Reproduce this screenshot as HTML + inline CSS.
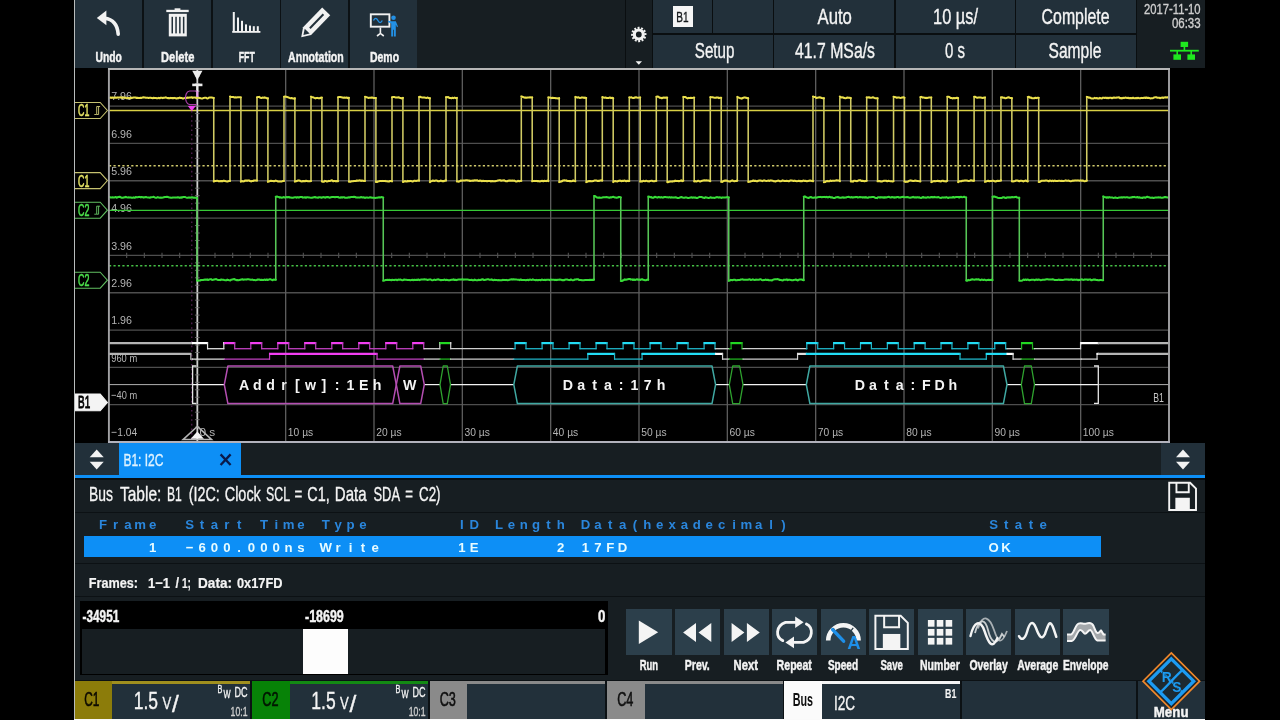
<!DOCTYPE html>
<html lang="en"><head><meta charset="utf-8"><title>Oscilloscope - I2C bus decode</title>
<style>
*{box-sizing:border-box}
html,body{margin:0;padding:0;background:#000}
body{position:relative;width:1280px;height:720px;overflow:hidden;font-family:"Liberation Sans",sans-serif;color:#fff}
.b{position:absolute}
#scope{position:absolute;left:0;top:0;width:1280px;height:720px;will-change:transform}
.t{position:absolute;white-space:pre;transform-origin:0 0;display:block}
svg{position:absolute;display:block}
svg.plot{left:75px;top:67px}
svg.ov{left:0;top:0;pointer-events:none}
.screen{position:absolute;left:75px;top:0;width:1130px;height:720px;background:#171e22}
</style></head><body>
<div id="scope">
<div class="screen"></div>
<div id="toolbar">
<div class="b" style="left:75px;top:0px;width:1130px;height:68px;background:#171e22;"></div>
<div class="b" style="left:73.5px;top:0px;width:1.5px;height:68px;background:#0c1114;"></div>
<div class="b btn" style="left:75px;top:0px;width:67px;height:68px;background:#22303a;"></div>
<div class="b" style="left:142px;top:0px;width:1.5px;height:68px;background:#0c1114;"></div>
<div class="b" style="left:142.5px;top:0px;width:1.5px;height:68px;background:#0c1114;"></div>
<div class="b btn" style="left:144px;top:0px;width:67px;height:68px;background:#22303a;"></div>
<div class="b" style="left:211px;top:0px;width:1.5px;height:68px;background:#0c1114;"></div>
<div class="b" style="left:211px;top:0px;width:1.5px;height:68px;background:#0c1114;"></div>
<div class="b btn" style="left:212.5px;top:0px;width:67px;height:68px;background:#22303a;"></div>
<div class="b" style="left:279.5px;top:0px;width:1.5px;height:68px;background:#0c1114;"></div>
<div class="b" style="left:279.5px;top:0px;width:1.5px;height:68px;background:#0c1114;"></div>
<div class="b btn" style="left:281px;top:0px;width:67px;height:68px;background:#22303a;"></div>
<div class="b" style="left:348px;top:0px;width:1.5px;height:68px;background:#0c1114;"></div>
<div class="b" style="left:348.5px;top:0px;width:1.5px;height:68px;background:#0c1114;"></div>
<div class="b btn" style="left:350px;top:0px;width:67px;height:68px;background:#22303a;"></div>
<div class="b" style="left:624.8px;top:0px;width:1.2px;height:68px;background:#0a0e10;"></div>
<div class="b" style="left:651.8px;top:0px;width:1.2px;height:68px;background:#0a0e10;"></div>
<div class="b" style="left:653px;top:0px;width:484px;height:68px;background:#0a0e10;"></div>
<div class="b cell" style="left:653px;top:0px;width:59px;height:33px;background:#22303a;"></div>
<div class="b cell" style="left:713.4px;top:0px;width:59.2px;height:33px;background:#22303a;"></div>
<div class="b cell" style="left:653px;top:35px;width:119.6px;height:33px;background:#22303a;"></div>
<div class="b cell" style="left:774.3px;top:0px;width:119.5px;height:33px;background:#22303a;"></div>
<div class="b cell" style="left:774.3px;top:35px;width:119.5px;height:33px;background:#22303a;"></div>
<div class="b cell" style="left:895.5px;top:0px;width:119.1px;height:33px;background:#22303a;"></div>
<div class="b cell" style="left:895.5px;top:35px;width:119.1px;height:33px;background:#22303a;"></div>
<div class="b cell" style="left:1016.3px;top:0px;width:119.5px;height:33px;background:#22303a;"></div>
<div class="b cell" style="left:1016.3px;top:35px;width:119.5px;height:33px;background:#22303a;"></div>
<div class="b" style="left:672.5px;top:6.3px;width:20.6px;height:21px;background:#f6f6f6;"></div>
<svg class="ov" width="1280" height="720" viewBox="0 0 1280 720" font-family="Liberation Sans, sans-serif"><text x="95.60" y="62" font-size="15.12" fill="#f4f4f4" stroke="#f4f4f4" stroke-width="0.45" textLength="26.30" lengthAdjust="spacingAndGlyphs" xml:space="preserve" font-weight="700">Undo</text><text x="161.00" y="62" font-size="15.12" fill="#f4f4f4" stroke="#f4f4f4" stroke-width="0.45" textLength="33.39" lengthAdjust="spacingAndGlyphs" xml:space="preserve" font-weight="700">Delete</text><text x="238.75" y="62" font-size="15.12" fill="#f4f4f4" stroke="#f4f4f4" stroke-width="0.45" textLength="16.00" lengthAdjust="spacingAndGlyphs" xml:space="preserve" font-weight="700">FFT</text><text x="288.10" y="62" font-size="15.12" fill="#f4f4f4" stroke="#f4f4f4" stroke-width="0.45" textLength="55.64" lengthAdjust="spacingAndGlyphs" xml:space="preserve" font-weight="700">Annotation</text><text x="370.00" y="62" font-size="15.12" fill="#f4f4f4" stroke="#f4f4f4" stroke-width="0.45" textLength="29.01" lengthAdjust="spacingAndGlyphs" xml:space="preserve" font-weight="700">Demo</text><text x="676.30" y="22" font-size="14.53" fill="#14181b" stroke="#14181b" stroke-width="0.35" textLength="12.31" lengthAdjust="spacingAndGlyphs" xml:space="preserve">B1</text><text x="694.80" y="58" font-size="21.80" fill="#f4f4f4" stroke="#f4f4f4" stroke-width="0.35" textLength="39.61" lengthAdjust="spacingAndGlyphs" xml:space="preserve">Setup</text><text x="817.50" y="24" font-size="21.22" fill="#f4f4f4" stroke="#f4f4f4" stroke-width="0.35" textLength="34.39" lengthAdjust="spacingAndGlyphs" xml:space="preserve">Auto</text><text x="795.00" y="58" font-size="21.80" fill="#f4f4f4" stroke="#f4f4f4" stroke-width="0.35" textLength="80.01" lengthAdjust="spacingAndGlyphs" xml:space="preserve">41.7 MSa/s</text><text x="933.10" y="24" font-size="21.22" fill="#f4f4f4" stroke="#f4f4f4" stroke-width="0.35" textLength="44.95" lengthAdjust="spacingAndGlyphs" xml:space="preserve">10 µs/</text><text x="945.00" y="58" font-size="21.80" fill="#f4f4f4" stroke="#f4f4f4" stroke-width="0.35" textLength="19.99" lengthAdjust="spacingAndGlyphs" xml:space="preserve">0 s</text><text x="1041.60" y="24" font-size="21.22" fill="#f4f4f4" stroke="#f4f4f4" stroke-width="0.35" textLength="67.90" lengthAdjust="spacingAndGlyphs" xml:space="preserve">Complete</text><text x="1048.50" y="58" font-size="21.80" fill="#f4f4f4" stroke="#f4f4f4" stroke-width="0.35" textLength="52.81" lengthAdjust="spacingAndGlyphs" xml:space="preserve">Sample</text><text x="1144.00" y="14" font-size="14.83" fill="#cfcfcf" stroke="#cfcfcf" stroke-width="0.35" textLength="56.61" lengthAdjust="spacingAndGlyphs" xml:space="preserve">2017-11-10</text><text x="1171.90" y="28" font-size="14.24" fill="#cfcfcf" stroke="#cfcfcf" stroke-width="0.35" textLength="28.70" lengthAdjust="spacingAndGlyphs" xml:space="preserve">06:33</text></svg>
</div>
<svg class="plot" width="1130" height="376" viewBox="75 67 1130 376" font-family="Liberation Sans, sans-serif">
<rect x="75" y="68" width="1130" height="375" fill="#000"/>
<g stroke="#4e4e4e" stroke-width="1.3" fill="none"><line x1="109.0" x2="1169.0" y1="106.08" y2="106.08"/><line x1="109.0" x2="1169.0" y1="143.41" y2="143.41"/><line x1="109.0" x2="1169.0" y1="180.74" y2="180.74"/><line x1="109.0" x2="1169.0" y1="218.07" y2="218.07"/><line x1="109.0" x2="1169.0" y1="255.40" y2="255.40"/><line x1="109.0" x2="1169.0" y1="292.73" y2="292.73"/><line x1="109.0" x2="1169.0" y1="330.06" y2="330.06"/><line x1="109.0" x2="1169.0" y1="367.39" y2="367.39"/><line x1="109.0" x2="1169.0" y1="404.72" y2="404.72"/></g><g stroke="#5e5e5e" stroke-width="1.3" fill="none"><line y1="68.75" y2="442.05" x1="285.67" x2="285.67"/><line y1="68.75" y2="442.05" x1="374.00" x2="374.00"/><line y1="68.75" y2="442.05" x1="462.33" x2="462.33"/><line y1="68.75" y2="442.05" x1="550.67" x2="550.67"/><line y1="68.75" y2="442.05" x1="639.00" x2="639.00"/><line y1="68.75" y2="442.05" x1="727.33" x2="727.33"/><line y1="68.75" y2="442.05" x1="815.67" x2="815.67"/><line y1="68.75" y2="442.05" x1="904.00" x2="904.00"/><line y1="68.75" y2="442.05" x1="992.33" x2="992.33"/><line y1="68.75" y2="442.05" x1="1080.67" x2="1080.67"/></g><path d="M126.67,252.80v5.2M144.33,252.80v5.2M162.00,252.80v5.2M179.67,252.80v5.2M215.00,252.80v5.2M232.67,252.80v5.2M250.33,252.80v5.2M268.00,252.80v5.2M303.33,252.80v5.2M321.00,252.80v5.2M338.67,252.80v5.2M356.33,252.80v5.2M391.67,252.80v5.2M409.33,252.80v5.2M427.00,252.80v5.2M444.67,252.80v5.2M480.00,252.80v5.2M497.67,252.80v5.2M515.33,252.80v5.2M533.00,252.80v5.2M568.33,252.80v5.2M586.00,252.80v5.2M603.67,252.80v5.2M621.33,252.80v5.2M656.67,252.80v5.2M674.33,252.80v5.2M692.00,252.80v5.2M709.67,252.80v5.2M745.00,252.80v5.2M762.67,252.80v5.2M780.33,252.80v5.2M798.00,252.80v5.2M833.33,252.80v5.2M851.00,252.80v5.2M868.67,252.80v5.2M886.33,252.80v5.2M921.67,252.80v5.2M939.33,252.80v5.2M957.00,252.80v5.2M974.67,252.80v5.2M1010.00,252.80v5.2M1027.67,252.80v5.2M1045.33,252.80v5.2M1063.00,252.80v5.2M1098.33,252.80v5.2M1116.00,252.80v5.2M1133.67,252.80v5.2M1151.33,252.80v5.2" stroke="#525252" stroke-width="1.1" fill="none"/>
<g><text x="111.20" y="100.28" font-size="11.80" fill="#b4b4b4" textLength="20.79" lengthAdjust="spacingAndGlyphs">7.96</text><text x="111.20" y="137.61" font-size="11.80" fill="#b4b4b4" textLength="20.79" lengthAdjust="spacingAndGlyphs">6.96</text><text x="111.20" y="174.94" font-size="11.80" fill="#b4b4b4" textLength="20.79" lengthAdjust="spacingAndGlyphs">5.96</text><text x="111.20" y="212.27" font-size="11.80" fill="#b4b4b4" textLength="20.79" lengthAdjust="spacingAndGlyphs">4.96</text><text x="111.20" y="249.60" font-size="11.80" fill="#b4b4b4" textLength="20.79" lengthAdjust="spacingAndGlyphs">3.96</text><text x="111.20" y="286.93" font-size="11.80" fill="#b4b4b4" textLength="20.79" lengthAdjust="spacingAndGlyphs">2.96</text><text x="111.20" y="324.26" font-size="11.80" fill="#b4b4b4" textLength="20.79" lengthAdjust="spacingAndGlyphs">1.96</text><text x="111.20" y="361.59" font-size="11.80" fill="#b4b4b4" textLength="25.99" lengthAdjust="spacingAndGlyphs">960 m</text><text x="111.20" y="398.92" font-size="11.80" fill="#b4b4b4" textLength="26.00" lengthAdjust="spacingAndGlyphs">−40 m</text><text x="111.20" y="436.25" font-size="11.80" fill="#b4b4b4" textLength="26.00" lengthAdjust="spacingAndGlyphs">−1.04</text><text x="199.40" y="436.20" font-size="11.80" fill="#b4b4b4" textLength="15.79" lengthAdjust="spacingAndGlyphs">0 s</text><text x="287.87" y="436.20" font-size="11.80" fill="#b4b4b4" textLength="25.39" lengthAdjust="spacingAndGlyphs">10 µs</text><text x="376.20" y="436.20" font-size="11.80" fill="#b4b4b4" textLength="25.39" lengthAdjust="spacingAndGlyphs">20 µs</text><text x="464.53" y="436.20" font-size="11.80" fill="#b4b4b4" textLength="25.39" lengthAdjust="spacingAndGlyphs">30 µs</text><text x="552.87" y="436.20" font-size="11.80" fill="#b4b4b4" textLength="25.39" lengthAdjust="spacingAndGlyphs">40 µs</text><text x="641.20" y="436.20" font-size="11.80" fill="#b4b4b4" textLength="25.39" lengthAdjust="spacingAndGlyphs">50 µs</text><text x="729.53" y="436.20" font-size="11.80" fill="#b4b4b4" textLength="25.39" lengthAdjust="spacingAndGlyphs">60 µs</text><text x="817.87" y="436.20" font-size="11.80" fill="#b4b4b4" textLength="25.39" lengthAdjust="spacingAndGlyphs">70 µs</text><text x="906.20" y="436.20" font-size="11.80" fill="#b4b4b4" textLength="25.39" lengthAdjust="spacingAndGlyphs">80 µs</text><text x="994.53" y="436.20" font-size="11.80" fill="#b4b4b4" textLength="25.39" lengthAdjust="spacingAndGlyphs">90 µs</text><text x="1082.87" y="436.20" font-size="11.80" fill="#b4b4b4" textLength="31.00" lengthAdjust="spacingAndGlyphs">100 µs</text></g>
<line x1="109.0" x2="1169.0" y1="110.5" y2="110.5" stroke="#d9d045" stroke-width="1.3"/>
<line x1="109.0" x2="1169.0" y1="165.7" y2="165.7" stroke="#cfc96c" stroke-width="1.45" stroke-dasharray="2.2 2.25"/>
<line x1="109.0" x2="1169.0" y1="210.4" y2="210.4" stroke="#36c836" stroke-width="1.3"/>
<line x1="109.0" x2="1169.0" y1="265.8" y2="265.8" stroke="#46c046" stroke-width="1.45" stroke-dasharray="2.2 2.25"/>
<line x1="191.8" x2="191.8" y1="111" y2="441.05" stroke="#632763" stroke-width="1.1" stroke-dasharray="1.6 3"/><line x1="197.33" x2="197.33" y1="68.75" y2="442.05" stroke="#cfcfcf" stroke-width="1.8"/><path d="M194.93,76.22h4.8M194.93,83.68h4.8M194.93,91.15h4.8M194.93,98.61h4.8M194.93,106.08h4.8M194.93,113.55h4.8M194.93,121.01h4.8M194.93,128.48h4.8M194.93,135.94h4.8M194.93,143.41h4.8M194.93,150.88h4.8M194.93,158.34h4.8M194.93,165.81h4.8M194.93,173.27h4.8M194.93,180.74h4.8M194.93,188.21h4.8M194.93,195.67h4.8M194.93,203.14h4.8M194.93,210.60h4.8M194.93,218.07h4.8M194.93,225.54h4.8M194.93,233.00h4.8M194.93,240.47h4.8M194.93,247.93h4.8M194.93,255.40h4.8M194.93,262.87h4.8M194.93,270.33h4.8M194.93,277.80h4.8M194.93,285.26h4.8M194.93,292.73h4.8M194.93,300.20h4.8M194.93,307.66h4.8M194.93,315.13h4.8M194.93,322.59h4.8M194.93,330.06h4.8M194.93,337.53h4.8M194.93,344.99h4.8M194.93,352.46h4.8M194.93,359.92h4.8M194.93,367.39h4.8M194.93,374.86h4.8M194.93,382.32h4.8M194.93,389.79h4.8M194.93,397.25h4.8M194.93,404.72h4.8M194.93,412.19h4.8M194.93,419.65h4.8M194.93,427.12h4.8M194.93,434.58h4.8" stroke="#707070" stroke-width="0.9" fill="none"/>
<path d="M213.75,97.3V181.5M230.00,97.3V181.5M240.90,97.3V181.5M257.00,97.3V181.5M267.90,97.3V181.5M284.00,97.3V181.5M294.90,97.3V181.5M311.00,97.3V181.5M321.90,97.3V181.5M338.00,97.3V181.5M348.90,97.3V181.5M365.00,97.3V181.5M375.90,97.3V181.5M392.00,97.3V181.5M402.90,97.3V181.5M419.00,97.3V181.5M429.90,97.3V181.5M446.00,97.3V181.5M456.90,97.3V181.5M521.30,97.3V181.5M532.20,97.3V181.5M548.30,97.3V181.5M559.20,97.3V181.5M575.30,97.3V181.5M586.20,97.3V181.5M602.30,97.3V181.5M613.20,97.3V181.5M629.30,97.3V181.5M640.20,97.3V181.5M656.30,97.3V181.5M667.20,97.3V181.5M683.30,97.3V181.5M694.20,97.3V181.5M710.30,97.3V181.5M721.20,97.3V181.5M737.30,97.3V181.5M748.20,97.3V181.5M813.00,97.3V181.5M823.90,97.3V181.5M839.85,97.3V181.5M850.75,97.3V181.5M866.70,97.3V181.5M877.60,97.3V181.5M893.55,97.3V181.5M904.45,97.3V181.5M920.40,97.3V181.5M931.30,97.3V181.5M947.25,97.3V181.5M958.15,97.3V181.5M974.10,97.3V181.5M985.00,97.3V181.5M1000.95,97.3V181.5M1011.85,97.3V181.5M1027.80,97.3V181.5M1038.70,97.3V181.5M1086.75,97.3V181.5" fill="none" stroke="#d2cc64" stroke-width="1.55"/><path d="M109.6,97.7 L110.6,97.5 L111.6,97.9 L112.6,97.5 L113.6,97.7 L114.6,97.7 L115.6,97.4 L116.6,97.7 L117.6,97.4 L118.6,97.6 L119.6,97.4 L120.6,97.3 L121.6,97.5 L122.6,98.0 L123.6,97.6 L124.6,97.5 L125.6,97.8 L126.6,98.3 L127.6,98.1 L128.6,97.9 L129.6,98.4 L130.6,97.7 L131.6,98.1 L132.6,97.8 L133.6,97.5 L134.6,97.4 L135.6,97.5 L136.6,98.0 L137.6,97.7 L138.6,97.9 L139.6,98.0 L140.6,97.8 L141.6,97.9 L142.6,97.5 L143.6,97.3 L144.7,97.4 L145.7,97.8 L146.7,97.8 L147.7,97.7 L148.7,97.9 L149.7,97.8 L150.7,97.7 L151.7,98.1 L152.7,98.2 L153.7,97.8 L154.7,97.9 L155.7,97.9 L156.7,98.3 L157.7,98.3 L158.7,97.9 L159.7,98.3 L160.7,97.7 L161.7,97.8 L162.7,98.1 L163.7,97.7 L164.7,97.8 L165.7,97.4 L166.7,97.8 L167.7,98.1 L168.7,98.1 L169.7,98.3 L170.7,97.9 L171.7,98.1 L172.7,98.1 L173.7,98.1 L174.7,97.9 L175.7,98.2 L176.7,98.5 L177.7,98.1 L178.7,98.2 L179.7,97.6 L180.7,98.0 L181.7,98.1 L182.7,98.4 L183.7,98.4 L184.7,97.9 L185.7,97.8 L186.7,98.0 L187.7,97.5 L188.7,97.7 L189.7,97.5 L190.7,97.4 L191.7,97.2 L192.7,97.9 L193.7,97.5 L194.7,97.5 L195.7,97.6 L196.7,98.1 L197.7,97.6 L198.7,97.7 L199.7,97.9 L200.7,98.2 L201.7,98.4 L202.7,98.4 L203.7,97.9 L204.7,97.8 L205.7,97.7 L206.7,98.2 L207.7,98.5 L208.7,97.8 L209.7,97.6 L210.7,97.5 L211.7,97.5 L212.7,97.7 L213.8,97.9M213.8,181.5 L214.8,180.9 L215.8,181.0 L216.8,180.8 L217.8,180.8 L218.8,181.3 L219.8,181.3 L220.9,181.1 L221.9,181.1 L222.9,181.1 L223.9,180.6 L224.9,181.1 L225.9,181.3 L227.0,181.4 L228.0,181.4 L229.0,181.0 L230.0,180.9M230.0,96.5 L231.1,97.1 L232.2,97.0 L233.3,97.1 L234.4,97.4 L235.4,97.3 L236.5,97.5 L237.6,97.3 L238.7,97.2 L239.8,97.2 L240.9,97.2M240.9,181.6 L241.9,181.0 L242.9,181.4 L243.9,181.3 L244.9,180.6 L245.9,180.6 L246.9,180.6 L247.9,180.6 L248.9,180.4 L250.0,181.0 L251.0,181.4 L252.0,181.1 L253.0,181.0 L254.0,180.5 L255.0,180.4 L256.0,180.5 L257.0,180.5M257.0,97.2 L258.1,97.0 L259.2,96.9 L260.3,97.8 L261.4,98.0 L262.4,97.6 L263.5,97.8 L264.6,97.4 L265.7,97.7 L266.8,98.3 L267.9,98.4M267.9,181.9 L268.9,181.4 L269.9,181.1 L270.9,180.7 L271.9,181.0 L272.9,181.0 L273.9,181.2 L274.9,180.9 L275.9,180.6 L277.0,181.1 L278.0,181.4 L279.0,181.5 L280.0,181.4 L281.0,181.4 L282.0,181.4 L283.0,180.9 L284.0,180.9M284.0,96.8 L285.1,96.6 L286.2,96.7 L287.3,97.1 L288.4,97.4 L289.4,97.9 L290.5,98.3 L291.6,98.0 L292.7,98.4 L293.8,98.6 L294.9,98.6M294.9,181.6 L295.9,181.2 L296.9,180.9 L297.9,180.6 L298.9,180.4 L299.9,180.8 L300.9,181.2 L301.9,181.4 L302.9,181.1 L304.0,181.1 L305.0,181.3 L306.0,180.7 L307.0,181.0 L308.0,181.3 L309.0,181.3 L310.0,181.3 L311.0,181.1M311.0,96.6 L312.1,97.3 L313.2,97.3 L314.3,97.9 L315.4,98.4 L316.4,98.0 L317.5,97.9 L318.6,98.3 L319.7,98.3 L320.8,97.8 L321.9,97.5M321.9,181.4 L322.9,181.7 L323.9,181.7 L324.9,180.9 L325.9,181.1 L326.9,181.5 L327.9,181.3 L328.9,180.9 L329.9,181.0 L331.0,180.6 L332.0,180.3 L333.0,181.1 L334.0,181.1 L335.0,181.0 L336.0,181.4 L337.0,181.0 L338.0,181.3M338.0,97.2 L339.1,97.0 L340.2,97.1 L341.3,97.3 L342.4,97.5 L343.4,97.8 L344.5,97.6 L345.6,97.7 L346.7,97.5 L347.8,98.1 L348.9,97.8M348.9,181.7 L349.9,181.6 L350.9,181.7 L351.9,181.2 L352.9,181.3 L353.9,181.1 L354.9,181.0 L355.9,181.0 L356.9,180.5 L358.0,180.7 L359.0,180.5 L360.0,180.3 L361.0,180.9 L362.0,180.6 L363.0,180.7 L364.0,181.0 L365.0,181.0M365.0,96.7 L366.1,97.1 L367.2,97.4 L368.3,97.9 L369.4,97.7 L370.4,97.8 L371.5,97.6 L372.6,97.6 L373.7,98.0 L374.8,98.0 L375.9,98.0M375.9,181.9 L376.9,182.0 L377.9,181.5 L378.9,181.3 L379.9,181.0 L380.9,181.0 L381.9,181.1 L382.9,180.9 L383.9,181.0 L385.0,180.9 L386.0,181.3 L387.0,181.3 L388.0,181.4 L389.0,181.5 L390.0,181.0 L391.0,181.0 L392.0,181.4M392.0,97.2 L393.1,97.0 L394.2,97.0 L395.3,97.4 L396.4,97.4 L397.4,97.4 L398.5,97.3 L399.6,97.8 L400.7,98.1 L401.8,98.4 L402.9,97.8M402.9,181.9 L403.9,181.7 L404.9,181.1 L405.9,181.4 L406.9,181.5 L407.9,180.9 L408.9,181.3 L409.9,181.0 L410.9,180.9 L412.0,181.4 L413.0,181.4 L414.0,180.8 L415.0,180.8 L416.0,180.9 L417.0,180.7 L418.0,180.5 L419.0,180.6M419.0,97.1 L420.1,96.8 L421.2,97.3 L422.3,97.5 L423.4,97.4 L424.4,97.5 L425.5,97.8 L426.6,97.9 L427.7,97.5 L428.8,98.2 L429.9,98.3M429.9,182.1 L430.9,181.3 L431.9,181.0 L432.9,180.5 L433.9,180.9 L434.9,180.7 L435.9,180.5 L436.9,180.6 L437.9,181.2 L439.0,181.3 L440.0,180.9 L441.0,180.6 L442.0,181.1 L443.0,181.1 L444.0,181.2 L445.0,180.6 L446.0,180.4M446.0,97.1 L447.1,97.2 L448.2,97.0 L449.3,97.9 L450.4,98.1 L451.4,98.3 L452.5,97.7 L453.6,98.1 L454.7,97.6 L455.8,98.1 L456.9,97.9M456.9,181.5 L457.9,181.5 L458.9,181.7 L459.9,181.1 L460.9,180.5 L461.9,180.8 L462.9,180.6 L463.9,180.4 L464.9,180.4 L466.0,180.2 L467.0,180.3 L468.0,180.5 L469.0,180.5 L470.0,181.0 L471.0,180.7 L472.0,180.8 L473.0,180.6 L474.0,180.6 L475.0,180.3 L476.0,180.4 L477.0,180.2 L478.0,180.8 L479.0,180.9 L480.0,180.6 L481.0,180.7 L482.1,181.2 L483.1,180.7 L484.1,181.1 L485.1,180.9 L486.1,180.9 L487.1,181.2 L488.1,180.9 L489.1,180.9 L490.1,181.1 L491.1,181.4 L492.1,181.0 L493.1,181.3 L494.1,181.3 L495.1,181.2 L496.1,180.9 L497.1,180.8 L498.2,180.4 L499.2,180.3 L500.2,180.2 L501.2,180.8 L502.2,180.6 L503.2,180.5 L504.2,180.3 L505.2,181.0 L506.2,181.3 L507.2,181.2 L508.2,180.8 L509.2,180.6 L510.2,180.6 L511.2,180.7 L512.2,180.5 L513.2,180.7 L514.3,180.6 L515.3,181.2 L516.3,181.5 L517.3,181.2 L518.3,180.8 L519.3,181.3 L520.3,180.9 L521.3,180.8M521.3,96.4 L522.4,96.8 L523.5,97.2 L524.6,97.6 L525.7,97.6 L526.8,97.8 L527.8,97.4 L528.9,97.4 L530.0,97.3 L531.1,97.5 L532.2,97.3M532.2,181.3 L533.2,181.1 L534.2,180.9 L535.2,181.0 L536.2,180.9 L537.2,181.1 L538.2,181.1 L539.2,181.2 L540.2,181.4 L541.3,181.0 L542.3,180.8 L543.3,181.3 L544.3,180.8 L545.3,181.0 L546.3,181.1 L547.3,180.6 L548.3,181.1M548.3,97.3 L549.4,97.4 L550.5,97.7 L551.6,98.1 L552.7,97.8 L553.8,97.9 L554.8,97.9 L555.9,98.2 L557.0,98.3 L558.1,98.4 L559.2,98.2M559.2,182.1 L560.2,181.8 L561.2,181.6 L562.2,181.0 L563.2,180.4 L564.2,180.3 L565.2,180.5 L566.2,180.4 L567.2,181.0 L568.3,181.0 L569.3,181.1 L570.3,181.1 L571.3,181.2 L572.3,181.0 L573.3,180.5 L574.3,181.0 L575.3,181.2M575.3,96.9 L576.4,97.2 L577.5,97.6 L578.6,97.3 L579.7,98.0 L580.8,97.7 L581.8,97.4 L582.9,97.5 L584.0,97.9 L585.1,97.6 L586.2,98.0M586.2,182.1 L587.2,181.7 L588.2,181.3 L589.2,181.1 L590.2,181.1 L591.2,181.2 L592.2,181.2 L593.2,181.1 L594.2,180.6 L595.3,180.4 L596.3,180.5 L597.3,180.9 L598.3,180.7 L599.3,180.9 L600.3,180.4 L601.3,180.3 L602.3,180.4M602.3,97.1 L603.4,97.4 L604.5,97.7 L605.6,97.6 L606.7,97.9 L607.8,97.9 L608.8,97.9 L609.9,97.5 L611.0,98.1 L612.1,97.7 L613.2,98.3M613.2,182.1 L614.2,181.2 L615.2,181.1 L616.2,181.3 L617.2,181.4 L618.2,181.1 L619.2,180.8 L620.2,180.6 L621.2,181.2 L622.3,180.8 L623.3,180.9 L624.3,180.6 L625.3,180.8 L626.3,181.3 L627.3,180.7 L628.3,181.1 L629.3,181.0M629.3,97.3 L630.4,97.5 L631.5,97.3 L632.6,98.0 L633.7,98.0 L634.8,97.5 L635.8,97.3 L636.9,97.6 L638.0,97.7 L639.1,97.6 L640.2,97.4M640.2,181.6 L641.2,181.3 L642.2,181.5 L643.2,180.7 L644.2,181.0 L645.2,181.2 L646.2,180.7 L647.2,181.2 L648.2,181.2 L649.3,181.4 L650.3,180.9 L651.3,180.8 L652.3,180.8 L653.3,181.3 L654.3,181.2 L655.3,180.9 L656.3,180.8M656.3,96.7 L657.4,96.6 L658.5,96.8 L659.6,97.7 L660.7,97.7 L661.8,98.2 L662.8,97.8 L663.9,97.6 L665.0,97.8 L666.1,97.6 L667.2,97.6M667.2,182.1 L668.2,182.1 L669.2,181.8 L670.2,181.5 L671.2,181.5 L672.2,181.6 L673.2,181.2 L674.2,181.3 L675.2,180.6 L676.3,181.0 L677.3,180.9 L678.3,181.1 L679.3,181.1 L680.3,180.8 L681.3,180.4 L682.3,181.1 L683.3,180.6M683.3,96.9 L684.4,97.0 L685.5,97.1 L686.6,97.8 L687.7,98.4 L688.8,97.9 L689.8,98.0 L690.9,97.8 L692.0,97.9 L693.1,97.8 L694.2,97.5M694.2,181.4 L695.2,181.1 L696.2,181.5 L697.2,181.2 L698.2,180.7 L699.2,181.2 L700.2,181.5 L701.2,181.1 L702.2,180.7 L703.3,180.5 L704.3,180.3 L705.3,180.5 L706.3,180.3 L707.3,180.4 L708.3,180.5 L709.3,180.8 L710.3,181.2M710.3,97.1 L711.4,97.2 L712.5,97.3 L713.6,97.6 L714.7,97.8 L715.8,97.7 L716.8,97.4 L717.9,97.5 L719.0,98.1 L720.1,97.7 L721.2,97.8M721.2,181.8 L722.2,181.9 L723.2,181.2 L724.2,180.8 L725.2,180.6 L726.2,180.6 L727.2,180.7 L728.2,181.3 L729.2,181.4 L730.3,181.5 L731.3,180.7 L732.3,180.4 L733.3,180.9 L734.3,181.3 L735.3,181.0 L736.3,181.0 L737.3,180.5M737.3,96.8 L738.4,97.5 L739.5,97.9 L740.6,98.2 L741.7,98.6 L742.8,98.0 L743.8,97.6 L744.9,97.4 L746.0,97.7 L747.1,98.0 L748.2,98.4M748.2,181.9 L749.2,181.7 L750.2,181.7 L751.2,181.2 L752.2,181.0 L753.3,180.5 L754.3,181.0 L755.3,180.7 L756.3,181.2 L757.3,181.2 L758.3,180.8 L759.3,180.5 L760.3,180.5 L761.4,180.8 L762.4,181.1 L763.4,180.6 L764.4,180.4 L765.4,180.7 L766.4,180.9 L767.4,180.8 L768.4,180.6 L769.5,180.9 L770.5,180.4 L771.5,180.5 L772.5,180.7 L773.5,181.2 L774.5,181.2 L775.5,181.4 L776.5,181.1 L777.6,180.7 L778.6,180.6 L779.6,181.2 L780.6,181.2 L781.6,180.9 L782.6,180.4 L783.6,180.7 L784.6,181.0 L785.7,180.9 L786.7,180.7 L787.7,180.9 L788.7,181.3 L789.7,180.8 L790.7,180.4 L791.7,180.5 L792.8,180.7 L793.8,181.0 L794.8,180.6 L795.8,181.1 L796.8,181.2 L797.8,181.0 L798.8,180.7 L799.8,181.2 L800.9,180.9 L801.9,181.2 L802.9,180.8 L803.9,180.6 L804.9,181.0 L805.9,180.8 L806.9,181.3 L807.9,181.1 L809.0,180.7 L810.0,180.5 L811.0,180.7 L812.0,180.9 L813.0,181.3M813.0,96.6 L814.1,96.9 L815.2,97.0 L816.3,97.9 L817.4,97.7 L818.5,97.4 L819.5,97.3 L820.6,97.5 L821.7,98.1 L822.8,98.3 L823.9,98.3M823.9,182.2 L825.0,182.1 L826.0,181.4 L827.1,180.9 L828.2,181.2 L829.2,181.3 L830.3,180.6 L831.3,180.9 L832.4,180.8 L833.5,180.7 L834.5,180.7 L835.6,180.5 L836.7,180.2 L837.7,180.4 L838.8,180.5 L839.9,181.2M839.9,96.5 L840.9,97.4 L842.0,97.3 L843.1,97.4 L844.2,98.1 L845.3,98.3 L846.4,98.0 L847.5,97.5 L848.6,97.7 L849.7,97.7 L850.8,98.2M850.8,181.4 L851.8,181.2 L852.9,181.6 L853.9,180.8 L855.0,180.7 L856.1,181.1 L857.1,181.2 L858.2,180.6 L859.3,180.3 L860.3,180.2 L861.4,181.0 L862.4,180.7 L863.5,181.0 L864.6,181.3 L865.6,180.9 L866.7,180.7M866.7,97.3 L867.8,97.5 L868.9,97.3 L870.0,97.8 L871.1,97.8 L872.2,97.6 L873.2,97.3 L874.3,97.9 L875.4,98.3 L876.5,98.2 L877.6,98.4M877.6,181.3 L878.7,181.1 L879.7,181.1 L880.8,181.4 L881.9,181.5 L882.9,181.1 L884.0,180.7 L885.0,180.8 L886.1,180.8 L887.2,181.3 L888.2,180.8 L889.3,181.1 L890.4,181.2 L891.4,181.3 L892.5,181.4 L893.5,181.2M893.5,96.7 L894.6,96.9 L895.7,97.2 L896.8,97.8 L897.9,97.6 L899.0,97.5 L900.1,97.9 L901.2,97.7 L902.3,97.4 L903.4,97.2 L904.4,97.7M904.4,181.5 L905.5,181.9 L906.6,181.8 L907.6,181.8 L908.7,181.0 L909.8,180.6 L910.8,180.4 L911.9,180.7 L913.0,181.0 L914.0,180.9 L915.1,180.6 L916.1,180.7 L917.2,180.9 L918.3,181.1 L919.3,181.2 L920.4,181.4M920.4,97.1 L921.5,96.9 L922.6,97.6 L923.7,97.5 L924.8,97.9 L925.8,97.8 L926.9,98.1 L928.0,97.7 L929.1,97.6 L930.2,97.5 L931.3,97.4M931.3,182.1 L932.4,181.7 L933.4,181.2 L934.5,181.0 L935.6,181.3 L936.6,181.1 L937.7,180.7 L938.7,181.1 L939.8,181.1 L940.9,181.5 L941.9,180.8 L943.0,180.8 L944.1,181.2 L945.1,181.3 L946.2,181.5 L947.2,180.7M947.2,96.7 L948.3,96.7 L949.4,96.9 L950.5,97.9 L951.6,98.1 L952.7,98.4 L953.8,98.0 L954.9,98.3 L956.0,98.0 L957.1,97.7 L958.1,98.1M958.1,182.1 L959.2,181.3 L960.3,181.3 L961.3,181.2 L962.4,180.7 L963.5,180.7 L964.5,180.5 L965.6,180.4 L966.7,180.5 L967.7,180.8 L968.8,181.0 L969.8,180.7 L970.9,180.3 L972.0,180.5 L973.0,180.9 L974.1,180.6M974.1,96.7 L975.2,96.8 L976.3,97.5 L977.4,97.7 L978.5,97.5 L979.5,97.4 L980.6,97.6 L981.7,97.8 L982.8,98.0 L983.9,97.6 L985.0,97.4M985.0,181.9 L986.1,181.5 L987.1,181.1 L988.2,180.8 L989.3,181.2 L990.3,180.9 L991.4,180.9 L992.4,180.8 L993.5,180.8 L994.6,181.2 L995.6,181.5 L996.7,181.0 L997.8,180.7 L998.8,181.0 L999.9,180.7 L1001.0,180.3M1001.0,97.3 L1002.0,97.2 L1003.1,97.7 L1004.2,97.7 L1005.3,98.3 L1006.4,98.0 L1007.5,97.6 L1008.6,97.3 L1009.7,97.7 L1010.8,97.9 L1011.9,98.3M1011.9,181.3 L1012.9,181.4 L1014.0,181.2 L1015.0,181.0 L1016.1,180.5 L1017.2,180.5 L1018.2,180.8 L1019.3,181.2 L1020.4,180.7 L1021.4,180.8 L1022.5,181.1 L1023.5,181.4 L1024.6,180.9 L1025.7,180.5 L1026.7,181.1 L1027.8,181.5M1027.8,96.9 L1028.9,96.7 L1030.0,97.6 L1031.1,97.6 L1032.2,98.3 L1033.2,98.2 L1034.3,98.3 L1035.4,97.8 L1036.5,98.1 L1037.6,97.7 L1038.7,97.7M1038.7,182.0 L1039.7,182.0 L1040.7,181.2 L1041.7,180.8 L1042.7,180.7 L1043.7,180.8 L1044.7,180.8 L1045.7,180.5 L1046.7,180.5 L1047.7,180.9 L1048.7,181.3 L1049.7,180.6 L1050.7,180.8 L1051.7,181.1 L1052.7,180.6 L1053.7,181.1 L1054.7,180.6 L1055.7,180.9 L1056.7,180.9 L1057.7,181.0 L1058.7,180.8 L1059.7,180.8 L1060.7,180.9 L1061.7,180.8 L1062.7,181.0 L1063.7,180.9 L1064.7,180.8 L1065.7,180.4 L1066.7,180.8 L1067.7,180.8 L1068.7,180.6 L1069.7,181.0 L1070.7,181.2 L1071.7,181.0 L1072.7,180.6 L1073.7,180.8 L1074.7,180.5 L1075.7,180.4 L1076.7,180.6 L1077.7,180.4 L1078.7,180.6 L1079.7,180.8 L1080.7,180.4 L1081.7,180.8 L1082.7,180.5 L1083.7,180.9 L1084.7,181.2 L1085.7,181.0 L1086.8,180.5M1086.8,96.9 L1087.8,97.0 L1088.8,97.8 L1089.8,97.5 L1090.8,98.2 L1091.8,98.5 L1092.8,98.4 L1093.8,98.4 L1094.8,97.8 L1095.8,98.3 L1096.8,98.1 L1097.8,98.4 L1098.8,98.5 L1099.9,97.9 L1100.9,98.2 L1101.9,98.4 L1102.9,97.7 L1103.9,97.7 L1104.9,98.0 L1105.9,97.6 L1106.9,98.2 L1107.9,97.8 L1108.9,98.2 L1109.9,97.7 L1110.9,97.8 L1112.0,98.2 L1113.0,97.8 L1114.0,97.6 L1115.0,97.8 L1116.0,97.7 L1117.0,97.4 L1118.0,97.4 L1119.0,97.3 L1120.0,98.1 L1121.0,98.1 L1122.0,98.4 L1123.0,97.8 L1124.0,98.1 L1125.1,97.6 L1126.1,97.8 L1127.1,98.0 L1128.1,97.8 L1129.1,98.2 L1130.1,98.1 L1131.1,98.1 L1132.1,98.3 L1133.1,97.7 L1134.1,98.3 L1135.1,98.2 L1136.1,97.9 L1137.2,98.2 L1138.2,97.8 L1139.2,98.3 L1140.2,98.2 L1141.2,97.9 L1142.2,98.1 L1143.2,98.0 L1144.2,97.6 L1145.2,98.0 L1146.2,97.5 L1147.2,98.0 L1148.2,97.7 L1149.2,98.0 L1150.3,98.4 L1151.3,98.2 L1152.3,98.2 L1153.3,97.9 L1154.3,97.4 L1155.3,97.2 L1156.3,97.3 L1157.3,97.7 L1158.3,97.8 L1159.3,97.8 L1160.3,98.2 L1161.3,97.7 L1162.4,97.6 L1163.4,97.9 L1164.4,97.4 L1165.4,97.2 L1166.4,97.5 L1167.4,97.3 L1168.4,97.5" fill="none" stroke="#ebe04c" stroke-width="2.05" stroke-linejoin="round" stroke-linecap="round"/>
<path d="M197.00,196.8V280.4M275.75,196.8V280.4M383.25,196.8V280.4M594.00,196.8V280.4M620.75,196.8V280.4M648.25,196.8V280.4M728.75,196.8V280.4M803.75,196.8V280.4M966.25,196.8V280.4M992.50,196.8V280.4M1019.30,196.8V280.4M1103.25,196.8V280.4" fill="none" stroke="#56c656" stroke-width="1.55"/><path d="M109.6,197.1 L110.6,197.4 L111.6,197.5 L112.6,197.2 L113.6,197.4 L114.6,197.4 L115.6,197.0 L116.6,197.7 L117.6,197.3 L118.6,197.0 L119.6,196.8 L120.7,197.3 L121.7,197.7 L122.7,197.8 L123.7,197.5 L124.7,197.2 L125.7,196.9 L126.7,197.3 L127.7,197.4 L128.7,197.3 L129.7,197.5 L130.7,197.4 L131.7,197.8 L132.7,197.8 L133.7,197.3 L134.7,197.8 L135.7,197.1 L136.7,197.3 L137.7,197.3 L138.7,197.1 L139.7,196.9 L140.7,197.4 L141.7,197.0 L142.8,197.2 L143.8,197.7 L144.8,197.2 L145.8,197.0 L146.8,197.3 L147.8,197.4 L148.8,197.5 L149.8,197.7 L150.8,197.3 L151.8,197.2 L152.8,197.1 L153.8,196.8 L154.8,197.5 L155.8,197.7 L156.8,197.7 L157.8,197.1 L158.8,197.6 L159.8,197.7 L160.8,197.5 L161.8,197.7 L162.8,197.5 L163.8,197.2 L164.9,196.9 L165.9,196.9 L166.9,196.8 L167.9,197.0 L168.9,197.4 L169.9,197.6 L170.9,197.8 L171.9,197.8 L172.9,197.4 L173.9,197.4 L174.9,197.4 L175.9,197.6 L176.9,197.5 L177.9,197.2 L178.9,197.5 L179.9,197.9 L180.9,197.3 L181.9,197.7 L182.9,197.1 L183.9,197.0 L184.9,197.0 L185.9,197.4 L187.0,197.8 L188.0,197.8 L189.0,197.4 L190.0,197.8 L191.0,197.4 L192.0,197.2 L193.0,197.7 L194.0,197.6 L195.0,197.7 L196.0,197.7 L197.0,198.0M197.0,280.6 L198.0,280.7 L199.0,280.5 L200.0,280.5 L201.0,280.0 L202.0,280.1 L203.1,280.0 L204.1,279.7 L205.1,279.5 L206.1,279.8 L207.1,279.4 L208.1,280.0 L209.1,279.6 L210.1,279.2 L211.1,279.2 L212.1,279.9 L213.2,279.7 L214.2,279.4 L215.2,279.2 L216.2,279.1 L217.2,279.7 L218.2,279.9 L219.2,280.0 L220.2,280.1 L221.2,279.5 L222.2,279.8 L223.2,279.7 L224.3,280.0 L225.3,280.2 L226.3,280.3 L227.3,279.6 L228.3,280.1 L229.3,280.3 L230.3,280.4 L231.3,279.7 L232.3,279.5 L233.3,279.3 L234.4,279.1 L235.4,279.8 L236.4,280.1 L237.4,280.1 L238.4,280.2 L239.4,280.1 L240.4,279.7 L241.4,279.4 L242.4,279.2 L243.4,279.8 L244.5,279.5 L245.5,279.5 L246.5,279.6 L247.5,279.3 L248.5,279.3 L249.5,279.4 L250.5,279.8 L251.5,279.7 L252.5,279.6 L253.5,280.1 L254.5,280.0 L255.6,280.2 L256.6,280.1 L257.6,279.5 L258.6,279.6 L259.6,279.6 L260.6,280.0 L261.6,279.7 L262.6,280.0 L263.6,279.9 L264.6,279.6 L265.7,280.0 L266.7,279.5 L267.7,280.0 L268.7,279.6 L269.7,279.2 L270.7,279.3 L271.7,279.8 L272.7,280.2 L273.7,279.5 L274.7,279.7 L275.8,279.7M275.8,196.7 L276.8,196.5 L277.8,196.8 L278.8,197.0 L279.8,197.6 L280.8,197.3 L281.8,197.8 L282.8,197.4 L283.8,197.1 L284.8,197.5 L285.8,197.4 L286.8,197.0 L287.8,197.4 L288.8,197.0 L289.8,197.5 L290.8,197.6 L291.8,197.8 L292.8,197.7 L293.8,197.4 L294.8,197.3 L295.8,197.3 L296.8,197.7 L297.9,197.1 L298.9,197.7 L299.9,197.1 L300.9,197.0 L301.9,197.0 L302.9,197.6 L303.9,197.5 L304.9,197.3 L305.9,197.7 L306.9,197.3 L307.9,197.3 L308.9,197.4 L309.9,197.6 L310.9,197.7 L311.9,197.7 L312.9,197.4 L313.9,197.2 L314.9,197.0 L315.9,197.5 L316.9,197.6 L317.9,197.7 L319.0,197.2 L320.0,197.3 L321.0,197.6 L322.0,197.6 L323.0,197.1 L324.0,197.2 L325.0,197.7 L326.0,197.3 L327.0,197.1 L328.0,197.1 L329.0,197.4 L330.0,197.7 L331.0,197.2 L332.0,197.0 L333.0,197.0 L334.0,197.1 L335.0,197.3 L336.0,197.0 L337.0,197.1 L338.0,197.0 L339.0,197.6 L340.0,197.7 L341.1,197.2 L342.1,197.7 L343.1,197.2 L344.1,197.2 L345.1,197.8 L346.1,197.8 L347.1,197.8 L348.1,197.5 L349.1,197.2 L350.1,197.4 L351.1,197.0 L352.1,197.0 L353.1,197.1 L354.1,196.8 L355.1,197.0 L356.1,197.5 L357.1,197.6 L358.1,197.5 L359.1,197.6 L360.1,197.4 L361.1,197.1 L362.2,197.4 L363.2,197.3 L364.2,197.6 L365.2,197.9 L366.2,197.5 L367.2,197.5 L368.2,197.7 L369.2,197.5 L370.2,197.2 L371.2,197.5 L372.2,197.8 L373.2,197.8 L374.2,197.8 L375.2,197.9 L376.2,197.8 L377.2,197.7 L378.2,197.5 L379.2,197.3 L380.2,197.5 L381.2,197.1 L382.2,197.2 L383.2,197.6M383.2,280.8 L384.3,280.6 L385.3,280.1 L386.3,279.9 L387.3,279.7 L388.3,279.9 L389.3,279.7 L390.3,279.9 L391.3,280.3 L392.3,279.7 L393.3,279.9 L394.3,280.1 L395.3,279.8 L396.3,279.8 L397.3,280.2 L398.3,279.6 L399.3,279.7 L400.3,279.5 L401.3,279.9 L402.3,280.3 L403.3,280.0 L404.3,279.5 L405.3,279.7 L406.3,279.8 L407.3,280.0 L408.3,279.9 L409.3,280.0 L410.3,280.2 L411.4,280.0 L412.4,279.8 L413.4,280.2 L414.4,279.7 L415.4,279.9 L416.4,279.8 L417.4,280.0 L418.4,279.5 L419.4,280.1 L420.4,279.8 L421.4,279.4 L422.4,279.4 L423.4,279.5 L424.4,279.2 L425.4,279.5 L426.4,279.6 L427.4,279.9 L428.4,279.7 L429.4,279.5 L430.4,279.4 L431.4,279.9 L432.4,280.2 L433.4,280.0 L434.4,279.6 L435.4,280.0 L436.4,279.8 L437.4,279.5 L438.4,279.3 L439.4,279.8 L440.5,280.1 L441.5,280.1 L442.5,279.9 L443.5,279.9 L444.5,279.6 L445.5,280.1 L446.5,279.8 L447.5,279.9 L448.5,280.2 L449.5,280.3 L450.5,280.0 L451.5,279.7 L452.5,279.8 L453.5,279.4 L454.5,280.0 L455.5,279.7 L456.5,280.1 L457.5,279.7 L458.5,279.6 L459.5,279.5 L460.5,279.6 L461.5,279.4 L462.5,279.2 L463.5,279.7 L464.5,279.6 L465.5,279.5 L466.5,279.5 L467.6,279.6 L468.6,279.7 L469.6,279.9 L470.6,280.0 L471.6,279.8 L472.6,280.2 L473.6,280.3 L474.6,279.6 L475.6,280.0 L476.6,280.3 L477.6,280.3 L478.6,279.7 L479.6,280.1 L480.6,280.0 L481.6,279.5 L482.6,279.2 L483.6,279.9 L484.6,280.0 L485.6,279.7 L486.6,279.4 L487.6,279.3 L488.6,279.3 L489.6,279.8 L490.6,279.7 L491.6,279.4 L492.6,280.0 L493.6,280.2 L494.6,279.7 L495.6,280.1 L496.7,280.0 L497.7,280.2 L498.7,280.1 L499.7,280.3 L500.7,280.3 L501.7,280.3 L502.7,279.8 L503.7,280.0 L504.7,279.9 L505.7,280.1 L506.7,279.9 L507.7,280.2 L508.7,280.0 L509.7,279.7 L510.7,279.5 L511.7,279.3 L512.7,279.6 L513.7,279.3 L514.7,279.5 L515.7,279.4 L516.7,279.6 L517.7,279.7 L518.7,279.8 L519.7,280.1 L520.7,279.5 L521.7,280.0 L522.7,279.9 L523.8,279.9 L524.8,280.0 L525.8,280.2 L526.8,279.9 L527.8,279.8 L528.8,280.2 L529.8,279.6 L530.8,279.8 L531.8,279.9 L532.8,279.4 L533.8,279.7 L534.8,279.9 L535.8,280.3 L536.8,279.9 L537.8,280.3 L538.8,280.0 L539.8,279.9 L540.8,280.2 L541.8,279.5 L542.8,279.9 L543.8,280.0 L544.8,279.7 L545.8,280.1 L546.8,279.8 L547.8,279.8 L548.8,279.8 L549.8,280.1 L550.8,279.6 L551.9,279.7 L552.9,279.7 L553.9,279.8 L554.9,280.1 L555.9,279.7 L556.9,280.1 L557.9,279.8 L558.9,279.8 L559.9,279.6 L560.9,279.7 L561.9,280.2 L562.9,280.1 L563.9,280.2 L564.9,279.8 L565.9,279.6 L566.9,279.5 L567.9,279.8 L568.9,279.9 L569.9,280.1 L570.9,279.5 L571.9,279.9 L572.9,280.2 L573.9,280.0 L574.9,279.5 L575.9,279.5 L576.9,279.2 L577.9,279.2 L578.9,279.9 L580.0,280.0 L581.0,280.0 L582.0,280.2 L583.0,280.3 L584.0,280.2 L585.0,280.1 L586.0,280.0 L587.0,280.1 L588.0,280.0 L589.0,280.1 L590.0,279.7 L591.0,279.9 L592.0,279.8 L593.0,280.0 L594.0,279.5M594.0,196.1 L595.0,196.1 L596.1,196.9 L597.1,197.5 L598.1,197.7 L599.1,197.4 L600.2,197.7 L601.2,197.8 L602.2,197.6 L603.3,197.3 L604.3,197.2 L605.3,197.2 L606.3,197.1 L607.4,197.2 L608.4,197.5 L609.4,197.8 L610.5,197.2 L611.5,197.4 L612.5,197.0 L613.5,196.8 L614.6,197.4 L615.6,197.5 L616.6,197.8 L617.7,197.5 L618.7,197.0 L619.7,197.1 L620.8,197.4M620.8,281.0 L621.8,281.0 L622.8,280.5 L623.8,280.0 L624.8,279.4 L625.8,279.8 L626.9,279.5 L627.9,279.3 L628.9,279.1 L629.9,279.0 L630.9,279.6 L632.0,279.4 L633.0,280.0 L634.0,279.5 L635.0,280.0 L636.0,279.6 L637.0,279.2 L638.1,279.8 L639.1,279.5 L640.1,279.9 L641.1,279.6 L642.1,279.3 L643.2,279.8 L644.2,280.0 L645.2,280.2 L646.2,280.2 L647.2,279.6 L648.2,279.8M648.2,196.6 L649.3,196.7 L650.3,197.3 L651.3,197.1 L652.3,197.8 L653.3,197.8 L654.3,197.1 L655.3,196.8 L656.3,197.3 L657.3,197.6 L658.3,197.1 L659.3,197.1 L660.3,197.5 L661.3,197.1 L662.3,197.6 L663.3,197.5 L664.4,197.0 L665.4,197.1 L666.4,197.3 L667.4,197.3 L668.4,197.5 L669.4,197.1 L670.4,197.6 L671.4,197.3 L672.4,197.5 L673.4,197.6 L674.4,197.4 L675.4,197.3 L676.4,197.6 L677.4,197.9 L678.4,197.9 L679.4,197.7 L680.5,197.3 L681.5,197.0 L682.5,197.6 L683.5,197.7 L684.5,197.8 L685.5,197.4 L686.5,197.5 L687.5,197.9 L688.5,197.9 L689.5,197.7 L690.5,197.4 L691.5,197.3 L692.5,197.7 L693.5,197.4 L694.5,197.6 L695.5,197.6 L696.5,197.9 L697.6,197.9 L698.6,197.4 L699.6,196.9 L700.6,197.0 L701.6,197.1 L702.6,197.4 L703.6,197.7 L704.6,197.9 L705.6,197.2 L706.6,197.6 L707.6,197.8 L708.6,197.9 L709.6,197.7 L710.6,197.3 L711.6,197.7 L712.6,197.8 L713.7,197.8 L714.7,197.9 L715.7,197.5 L716.7,197.1 L717.7,197.3 L718.7,197.6 L719.7,197.2 L720.7,197.6 L721.7,197.9 L722.7,197.4 L723.7,197.5 L724.7,197.6 L725.7,197.5 L726.7,197.2 L727.7,197.1 L728.8,197.5M728.8,280.9 L729.8,280.5 L730.8,279.9 L731.8,280.1 L732.8,280.1 L733.8,279.7 L734.8,279.8 L735.8,280.2 L736.8,280.3 L737.8,280.1 L738.8,279.9 L739.8,279.9 L740.8,279.6 L741.8,279.4 L742.8,279.3 L743.8,279.8 L744.8,279.7 L745.8,279.8 L746.8,279.7 L747.8,279.8 L748.8,279.5 L749.8,279.2 L750.8,280.0 L751.8,279.8 L752.8,279.4 L753.8,279.8 L754.8,280.0 L755.8,279.6 L756.8,279.8 L757.8,279.7 L758.8,279.8 L759.8,279.3 L760.8,279.2 L761.8,280.0 L762.8,280.2 L763.8,280.0 L764.8,279.9 L765.8,279.6 L766.8,280.0 L767.8,279.8 L768.8,280.2 L769.8,280.2 L770.8,280.3 L771.8,280.5 L772.8,279.9 L773.8,279.4 L774.8,279.3 L775.8,279.3 L776.8,279.2 L777.8,279.1 L778.8,279.5 L779.8,280.0 L780.8,279.9 L781.8,280.2 L782.8,280.4 L783.8,279.7 L784.8,279.8 L785.8,279.7 L786.8,279.4 L787.8,280.1 L788.8,279.7 L789.8,279.8 L790.8,279.9 L791.8,280.3 L792.8,280.2 L793.8,279.9 L794.8,279.8 L795.8,279.5 L796.8,280.1 L797.8,280.4 L798.8,279.8 L799.8,279.4 L800.8,279.4 L801.8,279.5 L802.8,280.0 L803.8,280.3M803.8,196.7 L804.8,196.4 L805.8,197.0 L806.8,197.4 L807.8,197.7 L808.8,198.0 L809.8,197.2 L810.8,197.0 L811.8,197.5 L812.8,197.8 L813.8,197.8 L814.8,197.4 L815.8,197.5 L816.8,197.7 L817.8,197.2 L818.8,197.1 L819.8,197.0 L820.8,196.9 L821.8,197.2 L822.8,197.0 L823.8,197.0 L824.8,196.9 L825.8,197.3 L826.8,196.9 L827.8,197.4 L828.8,197.1 L829.8,196.8 L830.8,197.5 L831.8,197.2 L832.8,197.7 L833.8,197.9 L834.8,198.0 L835.8,197.3 L836.9,197.3 L837.9,197.0 L838.9,197.6 L839.9,197.8 L840.9,197.7 L841.9,197.5 L842.9,197.3 L843.9,197.7 L844.9,197.5 L845.9,197.6 L846.9,197.1 L847.9,197.0 L848.9,196.8 L849.9,197.3 L850.9,197.4 L851.9,197.1 L852.9,197.6 L853.9,197.3 L854.9,197.3 L855.9,197.0 L856.9,197.0 L857.9,197.5 L858.9,197.3 L859.9,197.0 L860.9,197.2 L861.9,197.2 L862.9,197.7 L863.9,197.2 L864.9,197.7 L865.9,197.1 L866.9,197.7 L867.9,197.7 L869.0,197.3 L870.0,197.3 L871.0,197.2 L872.0,197.1 L873.0,197.0 L874.0,197.1 L875.0,197.7 L876.0,198.0 L877.0,198.1 L878.0,197.3 L879.0,197.2 L880.0,197.7 L881.0,197.1 L882.0,197.5 L883.0,197.2 L884.0,197.8 L885.0,197.1 L886.0,197.6 L887.0,197.3 L888.0,197.0 L889.0,196.8 L890.0,197.4 L891.0,197.4 L892.0,197.1 L893.0,197.2 L894.0,197.7 L895.0,197.3 L896.0,197.4 L897.0,197.1 L898.0,197.0 L899.0,197.5 L900.0,197.6 L901.0,197.2 L902.1,196.9 L903.1,196.8 L904.1,197.2 L905.1,197.3 L906.1,197.2 L907.1,197.0 L908.1,197.3 L909.1,197.6 L910.1,197.8 L911.1,197.6 L912.1,197.2 L913.1,196.9 L914.1,197.4 L915.1,197.3 L916.1,197.6 L917.1,197.1 L918.1,197.5 L919.1,197.3 L920.1,197.7 L921.1,197.9 L922.1,197.6 L923.1,197.0 L924.1,197.6 L925.1,197.5 L926.1,197.8 L927.1,197.4 L928.1,197.1 L929.1,197.6 L930.1,197.4 L931.1,197.1 L932.1,197.1 L933.1,197.4 L934.2,196.9 L935.2,197.2 L936.2,197.3 L937.2,197.4 L938.2,197.0 L939.2,197.4 L940.2,197.7 L941.2,197.9 L942.2,197.4 L943.2,197.6 L944.2,197.4 L945.2,197.6 L946.2,197.1 L947.2,197.6 L948.2,197.9 L949.2,197.6 L950.2,197.5 L951.2,197.5 L952.2,197.5 L953.2,197.0 L954.2,197.6 L955.2,197.3 L956.2,197.0 L957.2,196.9 L958.2,196.9 L959.2,197.5 L960.2,197.0 L961.2,196.8 L962.2,197.3 L963.2,197.1 L964.2,196.8 L965.2,197.2 L966.2,197.4M966.2,280.6 L967.3,280.6 L968.3,279.9 L969.3,280.2 L970.3,280.1 L971.3,279.5 L972.3,279.3 L973.3,279.6 L974.3,279.7 L975.3,279.5 L976.3,279.3 L977.4,279.5 L978.4,279.3 L979.4,279.7 L980.4,280.1 L981.4,279.6 L982.4,279.8 L983.4,280.0 L984.4,279.6 L985.4,280.0 L986.4,280.3 L987.5,279.9 L988.5,279.8 L989.5,280.1 L990.5,280.0 L991.5,279.8 L992.5,280.2M992.5,196.7 L993.5,196.6 L994.6,196.6 L995.6,196.9 L996.6,197.2 L997.7,197.8 L998.7,197.9 L999.7,198.0 L1000.7,198.0 L1001.8,198.0 L1002.8,197.2 L1003.8,197.3 L1004.9,197.8 L1005.9,198.0 L1006.9,197.4 L1008.0,197.3 L1009.0,197.5 L1010.0,197.3 L1011.1,197.4 L1012.1,197.0 L1013.1,197.2 L1014.1,197.3 L1015.2,196.9 L1016.2,196.8 L1017.2,197.6 L1018.3,197.7 L1019.3,198.0M1019.3,280.7 L1020.3,280.7 L1021.3,280.7 L1022.3,280.6 L1023.3,279.6 L1024.4,279.9 L1025.4,279.6 L1026.4,279.9 L1027.4,279.6 L1028.4,279.8 L1029.4,280.2 L1030.4,280.1 L1031.4,279.7 L1032.4,279.8 L1033.5,279.7 L1034.5,280.2 L1035.5,279.8 L1036.5,279.6 L1037.5,279.9 L1038.5,279.5 L1039.5,279.7 L1040.5,280.2 L1041.6,280.0 L1042.6,279.7 L1043.6,279.7 L1044.6,279.8 L1045.6,279.5 L1046.6,279.3 L1047.6,279.2 L1048.6,279.4 L1049.6,279.5 L1050.7,279.5 L1051.7,279.4 L1052.7,279.2 L1053.7,279.6 L1054.7,280.0 L1055.7,280.0 L1056.7,280.0 L1057.7,280.0 L1058.7,279.6 L1059.8,279.9 L1060.8,279.8 L1061.8,279.9 L1062.8,279.9 L1063.8,279.8 L1064.8,279.6 L1065.8,279.5 L1066.8,279.4 L1067.8,279.6 L1068.9,279.6 L1069.9,279.8 L1070.9,279.3 L1071.9,279.5 L1072.9,280.0 L1073.9,279.6 L1074.9,279.8 L1075.9,279.8 L1077.0,279.6 L1078.0,280.2 L1079.0,279.8 L1080.0,280.0 L1081.0,279.6 L1082.0,279.3 L1083.0,279.9 L1084.0,279.8 L1085.0,279.4 L1086.1,279.5 L1087.1,279.6 L1088.1,279.9 L1089.1,279.5 L1090.1,279.4 L1091.1,280.1 L1092.1,280.1 L1093.1,279.6 L1094.1,279.6 L1095.2,279.6 L1096.2,279.9 L1097.2,279.9 L1098.2,280.2 L1099.2,280.3 L1100.2,280.0 L1101.2,280.1 L1102.2,280.2 L1103.2,280.2M1103.2,196.4 L1104.3,196.9 L1105.3,197.2 L1106.3,197.7 L1107.3,197.3 L1108.3,197.7 L1109.3,197.1 L1110.3,197.5 L1111.3,197.5 L1112.3,197.5 L1113.3,197.9 L1114.3,197.7 L1115.3,197.4 L1116.3,197.7 L1117.3,197.9 L1118.3,197.7 L1119.3,197.4 L1120.3,197.4 L1121.3,197.3 L1122.3,197.6 L1123.3,197.3 L1124.3,197.2 L1125.3,197.4 L1126.3,197.3 L1127.3,197.2 L1128.3,197.6 L1129.3,197.8 L1130.3,197.6 L1131.3,197.4 L1132.3,197.1 L1133.3,197.1 L1134.3,196.9 L1135.3,197.3 L1136.3,197.4 L1137.3,197.0 L1138.3,197.6 L1139.3,197.3 L1140.3,197.7 L1141.3,197.8 L1142.3,198.0 L1143.3,197.4 L1144.3,197.3 L1145.3,197.8 L1146.3,197.1 L1147.4,196.8 L1148.4,197.2 L1149.4,197.3 L1150.4,197.8 L1151.4,197.8 L1152.4,197.6 L1153.4,198.0 L1154.4,197.7 L1155.4,197.5 L1156.4,197.6 L1157.4,197.4 L1158.4,197.3 L1159.4,197.4 L1160.4,197.3 L1161.4,197.8 L1162.4,197.7 L1163.4,197.6 L1164.4,197.1 L1165.4,197.1 L1166.4,197.2 L1167.4,197.4 L1168.4,197.5" fill="none" stroke="#38dc38" stroke-width="2.05" stroke-linejoin="round" stroke-linecap="round"/>
<line x1="108.50" x2="193.00" y1="343.10" y2="343.10" stroke="#b4b4b4" stroke-width="2.2"/><line x1="192.00" x2="208.05" y1="343.10" y2="343.10" stroke="#ffffff" stroke-width="2.2"/><line x1="207.55" x2="207.55" y1="342.10" y2="349.30" stroke="#e0e0e0" stroke-width="1.2"/><line x1="207.05" x2="224.30" y1="348.70" y2="348.70" stroke="#e0e0e0" stroke-width="1.3"/><line x1="223.80" x2="223.80" y1="342.10" y2="349.30" stroke="#e0e0e0" stroke-width="1.2"/><line x1="223.30" x2="224.80" y1="343.10" y2="343.10" stroke="#ffffff" stroke-width="2.2"/><line x1="223.80" x2="235.20" y1="343.10" y2="343.10" stroke="#f23ef2" stroke-width="2.2"/><line x1="234.70" x2="234.70" y1="342.10" y2="349.30" stroke="#c040c0" stroke-width="1.2"/><line x1="234.20" x2="251.30" y1="348.70" y2="348.70" stroke="#c040c0" stroke-width="1.3"/><line x1="250.80" x2="250.80" y1="342.10" y2="349.30" stroke="#c040c0" stroke-width="1.2"/><line x1="250.30" x2="262.20" y1="343.10" y2="343.10" stroke="#f23ef2" stroke-width="2.2"/><line x1="261.70" x2="261.70" y1="342.10" y2="349.30" stroke="#c040c0" stroke-width="1.2"/><line x1="261.20" x2="278.30" y1="348.70" y2="348.70" stroke="#c040c0" stroke-width="1.3"/><line x1="277.80" x2="277.80" y1="342.10" y2="349.30" stroke="#c040c0" stroke-width="1.2"/><line x1="277.30" x2="289.20" y1="343.10" y2="343.10" stroke="#f23ef2" stroke-width="2.2"/><line x1="288.70" x2="288.70" y1="342.10" y2="349.30" stroke="#c040c0" stroke-width="1.2"/><line x1="288.20" x2="305.30" y1="348.70" y2="348.70" stroke="#c040c0" stroke-width="1.3"/><line x1="304.80" x2="304.80" y1="342.10" y2="349.30" stroke="#c040c0" stroke-width="1.2"/><line x1="304.30" x2="316.20" y1="343.10" y2="343.10" stroke="#f23ef2" stroke-width="2.2"/><line x1="315.70" x2="315.70" y1="342.10" y2="349.30" stroke="#c040c0" stroke-width="1.2"/><line x1="315.20" x2="332.30" y1="348.70" y2="348.70" stroke="#c040c0" stroke-width="1.3"/><line x1="331.80" x2="331.80" y1="342.10" y2="349.30" stroke="#c040c0" stroke-width="1.2"/><line x1="331.30" x2="343.20" y1="343.10" y2="343.10" stroke="#f23ef2" stroke-width="2.2"/><line x1="342.70" x2="342.70" y1="342.10" y2="349.30" stroke="#c040c0" stroke-width="1.2"/><line x1="342.20" x2="359.30" y1="348.70" y2="348.70" stroke="#c040c0" stroke-width="1.3"/><line x1="358.80" x2="358.80" y1="342.10" y2="349.30" stroke="#c040c0" stroke-width="1.2"/><line x1="358.30" x2="370.20" y1="343.10" y2="343.10" stroke="#f23ef2" stroke-width="2.2"/><line x1="369.70" x2="369.70" y1="342.10" y2="349.30" stroke="#c040c0" stroke-width="1.2"/><line x1="369.20" x2="386.30" y1="348.70" y2="348.70" stroke="#c040c0" stroke-width="1.3"/><line x1="385.80" x2="385.80" y1="342.10" y2="349.30" stroke="#c040c0" stroke-width="1.2"/><line x1="385.30" x2="397.20" y1="343.10" y2="343.10" stroke="#f23ef2" stroke-width="2.2"/><line x1="396.70" x2="396.70" y1="342.10" y2="349.30" stroke="#c040c0" stroke-width="1.2"/><line x1="396.20" x2="413.30" y1="348.70" y2="348.70" stroke="#c040c0" stroke-width="1.3"/><line x1="412.80" x2="412.80" y1="342.10" y2="349.30" stroke="#c040c0" stroke-width="1.2"/><line x1="412.30" x2="424.20" y1="343.10" y2="343.10" stroke="#f23ef2" stroke-width="2.2"/><line x1="423.70" x2="423.70" y1="342.10" y2="349.30" stroke="#c040c0" stroke-width="1.2"/><line x1="423.20" x2="424.70" y1="348.70" y2="348.70" stroke="#c040c0" stroke-width="1.3"/><line x1="423.70" x2="440.30" y1="348.70" y2="348.70" stroke="#d0d0d0" stroke-width="1.3"/><line x1="439.80" x2="439.80" y1="342.10" y2="349.30" stroke="#d0d0d0" stroke-width="1.2"/><line x1="439.30" x2="440.50" y1="343.10" y2="343.10" stroke="#e0e0e0" stroke-width="2.2"/><line x1="439.50" x2="451.00" y1="343.10" y2="343.10" stroke="#22d822" stroke-width="2.2"/><line x1="450.00" x2="451.20" y1="343.10" y2="343.10" stroke="#e0e0e0" stroke-width="2.2"/><line x1="450.70" x2="450.70" y1="342.10" y2="349.30" stroke="#d0d0d0" stroke-width="1.2"/><line x1="450.20" x2="514.30" y1="348.70" y2="348.70" stroke="#d0d0d0" stroke-width="1.3"/><line x1="513.30" x2="515.60" y1="348.70" y2="348.70" stroke="#1fb4c8" stroke-width="1.3"/><line x1="515.10" x2="515.10" y1="342.10" y2="349.30" stroke="#1fb4c8" stroke-width="1.2"/><line x1="514.60" x2="526.50" y1="343.10" y2="343.10" stroke="#22dcf4" stroke-width="2.2"/><line x1="526.00" x2="526.00" y1="342.10" y2="349.30" stroke="#1fb4c8" stroke-width="1.2"/><line x1="525.50" x2="542.60" y1="348.70" y2="348.70" stroke="#1fb4c8" stroke-width="1.3"/><line x1="542.10" x2="542.10" y1="342.10" y2="349.30" stroke="#1fb4c8" stroke-width="1.2"/><line x1="541.60" x2="553.50" y1="343.10" y2="343.10" stroke="#22dcf4" stroke-width="2.2"/><line x1="553.00" x2="553.00" y1="342.10" y2="349.30" stroke="#1fb4c8" stroke-width="1.2"/><line x1="552.50" x2="569.60" y1="348.70" y2="348.70" stroke="#1fb4c8" stroke-width="1.3"/><line x1="569.10" x2="569.10" y1="342.10" y2="349.30" stroke="#1fb4c8" stroke-width="1.2"/><line x1="568.60" x2="580.50" y1="343.10" y2="343.10" stroke="#22dcf4" stroke-width="2.2"/><line x1="580.00" x2="580.00" y1="342.10" y2="349.30" stroke="#1fb4c8" stroke-width="1.2"/><line x1="579.50" x2="596.60" y1="348.70" y2="348.70" stroke="#1fb4c8" stroke-width="1.3"/><line x1="596.10" x2="596.10" y1="342.10" y2="349.30" stroke="#1fb4c8" stroke-width="1.2"/><line x1="595.60" x2="607.50" y1="343.10" y2="343.10" stroke="#22dcf4" stroke-width="2.2"/><line x1="607.00" x2="607.00" y1="342.10" y2="349.30" stroke="#1fb4c8" stroke-width="1.2"/><line x1="606.50" x2="623.60" y1="348.70" y2="348.70" stroke="#1fb4c8" stroke-width="1.3"/><line x1="623.10" x2="623.10" y1="342.10" y2="349.30" stroke="#1fb4c8" stroke-width="1.2"/><line x1="622.60" x2="634.50" y1="343.10" y2="343.10" stroke="#22dcf4" stroke-width="2.2"/><line x1="634.00" x2="634.00" y1="342.10" y2="349.30" stroke="#1fb4c8" stroke-width="1.2"/><line x1="633.50" x2="650.60" y1="348.70" y2="348.70" stroke="#1fb4c8" stroke-width="1.3"/><line x1="650.10" x2="650.10" y1="342.10" y2="349.30" stroke="#1fb4c8" stroke-width="1.2"/><line x1="649.60" x2="661.50" y1="343.10" y2="343.10" stroke="#22dcf4" stroke-width="2.2"/><line x1="661.00" x2="661.00" y1="342.10" y2="349.30" stroke="#1fb4c8" stroke-width="1.2"/><line x1="660.50" x2="677.60" y1="348.70" y2="348.70" stroke="#1fb4c8" stroke-width="1.3"/><line x1="677.10" x2="677.10" y1="342.10" y2="349.30" stroke="#1fb4c8" stroke-width="1.2"/><line x1="676.60" x2="688.50" y1="343.10" y2="343.10" stroke="#22dcf4" stroke-width="2.2"/><line x1="688.00" x2="688.00" y1="342.10" y2="349.30" stroke="#1fb4c8" stroke-width="1.2"/><line x1="687.50" x2="704.60" y1="348.70" y2="348.70" stroke="#1fb4c8" stroke-width="1.3"/><line x1="704.10" x2="704.10" y1="342.10" y2="349.30" stroke="#1fb4c8" stroke-width="1.2"/><line x1="703.60" x2="715.50" y1="343.10" y2="343.10" stroke="#22dcf4" stroke-width="2.2"/><line x1="715.00" x2="715.00" y1="342.10" y2="349.30" stroke="#1fb4c8" stroke-width="1.2"/><line x1="714.50" x2="716.10" y1="348.70" y2="348.70" stroke="#1fb4c8" stroke-width="1.3"/><line x1="715.10" x2="729.80" y1="348.70" y2="348.70" stroke="#d0d0d0" stroke-width="1.3"/><line x1="728.80" x2="731.60" y1="348.70" y2="348.70" stroke="#1fb01f" stroke-width="1.3"/><line x1="731.10" x2="731.10" y1="342.10" y2="349.30" stroke="#1fb01f" stroke-width="1.2"/><line x1="730.60" x2="742.50" y1="343.10" y2="343.10" stroke="#22d822" stroke-width="2.2"/><line x1="742.00" x2="742.00" y1="342.10" y2="349.30" stroke="#1fb01f" stroke-width="1.2"/><line x1="741.50" x2="743.50" y1="348.70" y2="348.70" stroke="#1fb01f" stroke-width="1.3"/><line x1="742.50" x2="806.80" y1="348.70" y2="348.70" stroke="#d0d0d0" stroke-width="1.3"/><line x1="805.80" x2="807.30" y1="348.70" y2="348.70" stroke="#1fb4c8" stroke-width="1.3"/><line x1="806.80" x2="806.80" y1="342.10" y2="349.30" stroke="#1fb4c8" stroke-width="1.2"/><line x1="806.30" x2="818.20" y1="343.10" y2="343.10" stroke="#22dcf4" stroke-width="2.2"/><line x1="817.70" x2="817.70" y1="342.10" y2="349.30" stroke="#1fb4c8" stroke-width="1.2"/><line x1="817.20" x2="834.15" y1="348.70" y2="348.70" stroke="#1fb4c8" stroke-width="1.3"/><line x1="833.65" x2="833.65" y1="342.10" y2="349.30" stroke="#1fb4c8" stroke-width="1.2"/><line x1="833.15" x2="845.05" y1="343.10" y2="343.10" stroke="#22dcf4" stroke-width="2.2"/><line x1="844.55" x2="844.55" y1="342.10" y2="349.30" stroke="#1fb4c8" stroke-width="1.2"/><line x1="844.05" x2="861.00" y1="348.70" y2="348.70" stroke="#1fb4c8" stroke-width="1.3"/><line x1="860.50" x2="860.50" y1="342.10" y2="349.30" stroke="#1fb4c8" stroke-width="1.2"/><line x1="860.00" x2="871.90" y1="343.10" y2="343.10" stroke="#22dcf4" stroke-width="2.2"/><line x1="871.40" x2="871.40" y1="342.10" y2="349.30" stroke="#1fb4c8" stroke-width="1.2"/><line x1="870.90" x2="887.85" y1="348.70" y2="348.70" stroke="#1fb4c8" stroke-width="1.3"/><line x1="887.35" x2="887.35" y1="342.10" y2="349.30" stroke="#1fb4c8" stroke-width="1.2"/><line x1="886.85" x2="898.75" y1="343.10" y2="343.10" stroke="#22dcf4" stroke-width="2.2"/><line x1="898.25" x2="898.25" y1="342.10" y2="349.30" stroke="#1fb4c8" stroke-width="1.2"/><line x1="897.75" x2="914.70" y1="348.70" y2="348.70" stroke="#1fb4c8" stroke-width="1.3"/><line x1="914.20" x2="914.20" y1="342.10" y2="349.30" stroke="#1fb4c8" stroke-width="1.2"/><line x1="913.70" x2="925.60" y1="343.10" y2="343.10" stroke="#22dcf4" stroke-width="2.2"/><line x1="925.10" x2="925.10" y1="342.10" y2="349.30" stroke="#1fb4c8" stroke-width="1.2"/><line x1="924.60" x2="941.55" y1="348.70" y2="348.70" stroke="#1fb4c8" stroke-width="1.3"/><line x1="941.05" x2="941.05" y1="342.10" y2="349.30" stroke="#1fb4c8" stroke-width="1.2"/><line x1="940.55" x2="952.45" y1="343.10" y2="343.10" stroke="#22dcf4" stroke-width="2.2"/><line x1="951.95" x2="951.95" y1="342.10" y2="349.30" stroke="#1fb4c8" stroke-width="1.2"/><line x1="951.45" x2="968.40" y1="348.70" y2="348.70" stroke="#1fb4c8" stroke-width="1.3"/><line x1="967.90" x2="967.90" y1="342.10" y2="349.30" stroke="#1fb4c8" stroke-width="1.2"/><line x1="967.40" x2="979.30" y1="343.10" y2="343.10" stroke="#22dcf4" stroke-width="2.2"/><line x1="978.80" x2="978.80" y1="342.10" y2="349.30" stroke="#1fb4c8" stroke-width="1.2"/><line x1="978.30" x2="995.25" y1="348.70" y2="348.70" stroke="#1fb4c8" stroke-width="1.3"/><line x1="994.75" x2="994.75" y1="342.10" y2="349.30" stroke="#1fb4c8" stroke-width="1.2"/><line x1="994.25" x2="1006.15" y1="343.10" y2="343.10" stroke="#22dcf4" stroke-width="2.2"/><line x1="1005.65" x2="1005.65" y1="342.10" y2="349.30" stroke="#1fb4c8" stroke-width="1.2"/><line x1="1005.15" x2="1007.50" y1="348.70" y2="348.70" stroke="#1fb4c8" stroke-width="1.3"/><line x1="1006.50" x2="1021.80" y1="348.70" y2="348.70" stroke="#d0d0d0" stroke-width="1.3"/><line x1="1020.80" x2="1022.10" y1="348.70" y2="348.70" stroke="#1fb01f" stroke-width="1.3"/><line x1="1021.60" x2="1021.60" y1="342.10" y2="349.30" stroke="#1fb01f" stroke-width="1.2"/><line x1="1021.10" x2="1033.00" y1="343.10" y2="343.10" stroke="#22d822" stroke-width="2.2"/><line x1="1032.50" x2="1032.50" y1="342.10" y2="349.30" stroke="#1fb01f" stroke-width="1.2"/><line x1="1032.00" x2="1035.00" y1="348.70" y2="348.70" stroke="#1fb01f" stroke-width="1.3"/><line x1="1034.00" x2="1081.05" y1="348.70" y2="348.70" stroke="#d0d0d0" stroke-width="1.3"/><line x1="1080.55" x2="1080.55" y1="342.10" y2="349.30" stroke="#d0d0d0" stroke-width="1.2"/><line x1="1080.05" x2="1081.80" y1="343.10" y2="343.10" stroke="#e0e0e0" stroke-width="2.2"/><line x1="1080.80" x2="1098.80" y1="343.10" y2="343.10" stroke="#ffffff" stroke-width="2.2"/><line x1="1097.80" x2="1169.50" y1="343.10" y2="343.10" stroke="#b4b4b4" stroke-width="2.2"/><line x1="108.50" x2="191.30" y1="353.90" y2="353.90" stroke="#b4b4b4" stroke-width="2.2"/><line x1="190.80" x2="190.80" y1="352.90" y2="359.70" stroke="#b4b4b4" stroke-width="1.2"/><line x1="190.30" x2="193.00" y1="359.10" y2="359.10" stroke="#b4b4b4" stroke-width="1.3"/><line x1="192.00" x2="224.80" y1="359.10" y2="359.10" stroke="#e0e0e0" stroke-width="1.3"/><line x1="223.80" x2="270.05" y1="359.10" y2="359.10" stroke="#c040c0" stroke-width="1.3"/><line x1="269.55" x2="269.55" y1="352.90" y2="359.70" stroke="#c040c0" stroke-width="1.2"/><line x1="269.05" x2="377.55" y1="353.90" y2="353.90" stroke="#f23ef2" stroke-width="2.2"/><line x1="377.05" x2="377.05" y1="352.90" y2="359.70" stroke="#c040c0" stroke-width="1.2"/><line x1="376.55" x2="424.70" y1="359.10" y2="359.10" stroke="#c040c0" stroke-width="1.3"/><line x1="423.70" x2="440.50" y1="359.10" y2="359.10" stroke="#d0d0d0" stroke-width="1.3"/><line x1="439.50" x2="451.00" y1="359.10" y2="359.10" stroke="#1fb01f" stroke-width="1.3"/><line x1="450.00" x2="514.30" y1="359.10" y2="359.10" stroke="#d0d0d0" stroke-width="1.3"/><line x1="513.30" x2="588.30" y1="359.10" y2="359.10" stroke="#1fb4c8" stroke-width="1.3"/><line x1="587.80" x2="587.80" y1="352.90" y2="359.70" stroke="#1fb4c8" stroke-width="1.2"/><line x1="587.30" x2="615.05" y1="353.90" y2="353.90" stroke="#22dcf4" stroke-width="2.2"/><line x1="614.55" x2="614.55" y1="352.90" y2="359.70" stroke="#1fb4c8" stroke-width="1.2"/><line x1="614.05" x2="642.55" y1="359.10" y2="359.10" stroke="#1fb4c8" stroke-width="1.3"/><line x1="642.05" x2="642.05" y1="352.90" y2="359.70" stroke="#1fb4c8" stroke-width="1.2"/><line x1="641.55" x2="716.10" y1="353.90" y2="353.90" stroke="#22dcf4" stroke-width="2.2"/><line x1="715.10" x2="723.05" y1="353.90" y2="353.90" stroke="#ffffff" stroke-width="2.2"/><line x1="722.55" x2="722.55" y1="352.90" y2="359.70" stroke="#d0d0d0" stroke-width="1.2"/><line x1="722.05" x2="729.80" y1="359.10" y2="359.10" stroke="#d0d0d0" stroke-width="1.3"/><line x1="728.80" x2="743.50" y1="359.10" y2="359.10" stroke="#1fb01f" stroke-width="1.3"/><line x1="742.50" x2="798.05" y1="359.10" y2="359.10" stroke="#d0d0d0" stroke-width="1.3"/><line x1="797.55" x2="797.55" y1="352.90" y2="359.70" stroke="#d0d0d0" stroke-width="1.2"/><line x1="797.05" x2="806.80" y1="353.90" y2="353.90" stroke="#e0e0e0" stroke-width="2.2"/><line x1="805.80" x2="960.55" y1="353.90" y2="353.90" stroke="#22dcf4" stroke-width="2.2"/><line x1="960.05" x2="960.05" y1="352.90" y2="359.70" stroke="#1fb4c8" stroke-width="1.2"/><line x1="959.55" x2="986.80" y1="359.10" y2="359.10" stroke="#1fb4c8" stroke-width="1.3"/><line x1="986.30" x2="986.30" y1="352.90" y2="359.70" stroke="#1fb4c8" stroke-width="1.2"/><line x1="985.80" x2="1007.50" y1="353.90" y2="353.90" stroke="#22dcf4" stroke-width="2.2"/><line x1="1006.50" x2="1013.60" y1="353.90" y2="353.90" stroke="#ffffff" stroke-width="2.2"/><line x1="1013.10" x2="1013.10" y1="352.90" y2="359.70" stroke="#d0d0d0" stroke-width="1.2"/><line x1="1012.60" x2="1021.80" y1="359.10" y2="359.10" stroke="#d0d0d0" stroke-width="1.3"/><line x1="1020.80" x2="1035.00" y1="359.10" y2="359.10" stroke="#1fb01f" stroke-width="1.3"/><line x1="1034.00" x2="1081.80" y1="359.10" y2="359.10" stroke="#d0d0d0" stroke-width="1.3"/><line x1="1080.80" x2="1097.55" y1="359.10" y2="359.10" stroke="#d0d0d0" stroke-width="1.3"/><line x1="1097.05" x2="1097.05" y1="352.90" y2="359.70" stroke="#d0d0d0" stroke-width="1.2"/><line x1="1096.55" x2="1098.80" y1="353.90" y2="353.90" stroke="#ffffff" stroke-width="2.2"/><line x1="1097.80" x2="1169.50" y1="353.90" y2="353.90" stroke="#b4b4b4" stroke-width="2.2"/><line x1="109.0" x2="192.5" y1="384.6" y2="384.6" stroke="#b0b0b0" stroke-width="1"/><line x1="1098.3" x2="1169.0" y1="384.6" y2="384.6" stroke="#b0b0b0" stroke-width="1"/><line x1="192.5" x2="224.3" y1="384.6" y2="384.6" stroke="#f2f2f2" stroke-width="1.2"/><line x1="424.3" x2="440" y1="384.6" y2="384.6" stroke="#f2f2f2" stroke-width="1.2"/><line x1="450.5" x2="513.8" y1="384.6" y2="384.6" stroke="#f2f2f2" stroke-width="1.2"/><line x1="715.6" x2="729.3" y1="384.6" y2="384.6" stroke="#f2f2f2" stroke-width="1.2"/><line x1="743" x2="806.3" y1="384.6" y2="384.6" stroke="#f2f2f2" stroke-width="1.2"/><line x1="1007" x2="1021.3" y1="384.6" y2="384.6" stroke="#f2f2f2" stroke-width="1.2"/><line x1="1034.5" x2="1098.3" y1="384.6" y2="384.6" stroke="#f2f2f2" stroke-width="1.2"/><path d="M196.4,366 H192.6 V403.3 H196.4" fill="none" stroke="#e6e6e6" stroke-width="1.3"/><path d="M1094,366 H1098.3 V403.3 H1094" fill="none" stroke="#e6e6e6" stroke-width="1.3"/><path d="M224.30,384.6 L227.90,366.0 H392.70 L396.30,384.6 L392.70,403.6 H227.90z" fill="none" stroke="#b44eb2" stroke-width="1.5" stroke-linejoin="round"/><path d="M396.30,384.6 L399.90,366.0 H420.70 L424.30,384.6 L420.70,403.6 H399.90z" fill="none" stroke="#b44eb2" stroke-width="1.5" stroke-linejoin="round"/><path d="M440.00,384.6 L443.20,366.0 H447.30 L450.50,384.6 L447.30,403.6 H443.20z" fill="none" stroke="#2fa32f" stroke-width="1.3" stroke-linejoin="round"/><path d="M513.80,384.6 L517.40,366.0 H712.00 L715.60,384.6 L712.00,403.6 H517.40z" fill="none" stroke="#3fa8a2" stroke-width="1.5" stroke-linejoin="round"/><path d="M729.30,384.6 L732.70,366.0 H739.60 L743.00,384.6 L739.60,403.6 H732.70z" fill="none" stroke="#2fa32f" stroke-width="1.3" stroke-linejoin="round"/><path d="M806.30,384.6 L809.90,366.0 H1003.40 L1007.00,384.6 L1003.40,403.6 H809.90z" fill="none" stroke="#3fa8a2" stroke-width="1.5" stroke-linejoin="round"/><path d="M1021.30,384.6 L1024.50,366.0 H1031.30 L1034.50,384.6 L1031.30,403.6 H1024.50z" fill="none" stroke="#2fa32f" stroke-width="1.3" stroke-linejoin="round"/><text x="244.10 257.40 270.70 284.00 297.30 310.60 323.90 337.20 350.50 363.80 377.10" y="389.80" font-size="14.20" fill="#f4f4f4" text-anchor="middle" font-weight="700">Addr[w]:1Eh</text><text x="409.60" y="389.80" font-size="14.20" fill="#f4f4f4" text-anchor="middle" font-weight="700">W</text><text x="567.95 581.25 594.55 607.85 621.15 634.45 647.75 661.05" y="389.80" font-size="14.20" fill="#f4f4f4" text-anchor="middle" font-weight="700">Data:17h</text><text x="859.75 873.05 886.35 899.65 912.95 926.25 939.55 952.85" y="389.80" font-size="14.20" fill="#f4f4f4" text-anchor="middle" font-weight="700">Data:FDh</text><text x="1153.20" y="401.80" font-size="12.60" fill="#c8c8c8" textLength="10.61" lengthAdjust="spacingAndGlyphs">B1</text>
<path d="M192.23,70.8h10.2L197.33,80.2z" fill="#ececec"/><rect x="192.23" y="83.6" width="10.2" height="2.6" fill="#ececec"/><rect x="196.23" y="83.6" width="2.2" height="8" fill="#ececec"/><path d="M196.83,91 H189.6 Q187.2,91.4 186.2,94 L185.3,97.6 L186.2,101.4 Q187.2,104.2 189.6,104.6 H196.83" fill="none" stroke="#a93fa9" stroke-width="1.2"/><path d="M187.8,106h8l-4,5z" fill="#f040f0"/><rect x="196.23" y="91" width="2.2" height="6" fill="#e8a0e8"/><path d="M197.33,426.4 L211.63,439.6 H183.03z" fill="none" stroke="#b4b4b4" stroke-width="1.5" stroke-linejoin="miter"/><path d="M197.33,431.6 L203.93,438.8 H190.73z" fill="#f4f4f4"/>
<rect x="108.9" y="69" width="1060.1" height="373" fill="none" stroke="#a2a2a4" stroke-width="1.9"/>
<line x1="108.0" x2="1170.0" y1="68.95" y2="68.95" stroke="#b6b6b6" stroke-width="2.1"/>
<line x1="108.0" x2="1170.0" y1="442" y2="442" stroke="#b2b2bc" stroke-width="1.9"/>
<path d="M74.5,102.50 H100.2 L107.4,110.50 L100.2,118.50 H74.5z" fill="#000" stroke="#c6c270" stroke-width="1.05" stroke-linejoin="miter"/><text x="78.00" y="116.40" font-size="15.80" fill="#e4e264" textLength="11.31" lengthAdjust="spacingAndGlyphs" stroke="#e4e264" stroke-width="0.65">C1</text><path d="M94.3,114.50h2.4v-8h3.4 M96.7,114.50h1.9v-8" fill="none" stroke="#c6c270" stroke-width="0.95"/>
<path d="M74.5,172.60 H100.2 L107.4,180.60 L100.2,188.60 H74.5z" fill="#000" stroke="#c6c270" stroke-width="1.05" stroke-linejoin="miter"/><text x="78.00" y="186.50" font-size="15.80" fill="#e4e264" textLength="11.31" lengthAdjust="spacingAndGlyphs" stroke="#e4e264" stroke-width="0.65">C1</text>
<path d="M74.5,202.20 H100.2 L107.4,210.20 L100.2,218.20 H74.5z" fill="#000" stroke="#62c062" stroke-width="1.05" stroke-linejoin="miter"/><text x="78.00" y="216.10" font-size="15.80" fill="#4be04b" textLength="11.31" lengthAdjust="spacingAndGlyphs" stroke="#4be04b" stroke-width="0.65">C2</text><path d="M94.3,214.20h2.4v-8h3.4 M96.7,214.20h1.9v-8" fill="none" stroke="#62c062" stroke-width="0.95"/>
<path d="M74.5,272.20 H100.2 L107.4,280.20 L100.2,288.20 H74.5z" fill="#000" stroke="#62c062" stroke-width="1.05" stroke-linejoin="miter"/><text x="78.00" y="286.10" font-size="15.80" fill="#4be04b" textLength="11.31" lengthAdjust="spacingAndGlyphs" stroke="#4be04b" stroke-width="0.65">C2</text>
<path d="M74.5,394.10 H100.2 L107.4,402.40 L100.2,410.70 H74.5z" fill="#f4f4f4" stroke="#f4f4f4" stroke-width="1.05" stroke-linejoin="miter"/><text x="78.10" y="408.20" font-size="17.00" fill="#000" textLength="12.11" lengthAdjust="spacingAndGlyphs" stroke="#000" stroke-width="0.9">B1</text>
</svg>
<div id="tabs">
<div class="b" style="left:75px;top:443px;width:1130px;height:36px;background:#171e22;"></div>
<div class="b" style="left:75px;top:443.2px;width:44px;height:32.8px;background:#22303a;"></div>
<div class="b tab" style="left:119px;top:443.2px;width:122px;height:35.2px;background:#0d8ff6;"></div>
<div class="b" style="left:1160.5px;top:443.2px;width:44.5px;height:32.8px;background:#22303a;"></div>
<div class="b" style="left:75px;top:475.3px;width:1130px;height:3.1px;background:#0d8ff6;"></div>
<div class="b" style="left:75px;top:478.4px;width:1130px;height:1.2px;background:#0a0e10;"></div>
<svg class="ov" width="1280" height="720" viewBox="0 0 1280 720" font-family="Liberation Sans, sans-serif"><text x="123.40" y="466" font-size="17.30" fill="#dff3ff" stroke="#dff3ff" stroke-width="0.35" textLength="40.10" lengthAdjust="spacingAndGlyphs" xml:space="preserve">B1: I2C</text></svg>
</div>
<div id="bustable">
<div class="b" style="left:75px;top:511.6px;width:1130px;height:1.4px;background:#0c1114;"></div>
<div class="b" style="left:75px;top:562.6px;width:1130px;height:1.4px;background:#0c1114;"></div>
<div class="b" style="left:75px;top:596px;width:1130px;height:1.4px;background:#0c1114;"></div>
<div class="b row" style="left:83.8px;top:536.2px;width:1017.7px;height:20.6px;background:#0d8ff6;"></div>
<svg class="ov" width="1280" height="720" viewBox="0 0 1280 720" font-family="Liberation Sans, sans-serif"><g><text x="89.00" y="501" font-size="20.78" fill="#f4f4f4" stroke="#f4f4f4" stroke-width="0.35" textLength="23.91" lengthAdjust="spacingAndGlyphs" xml:space="preserve">Bus</text><text x="119.90" y="501" font-size="20.78" fill="#f4f4f4" stroke="#f4f4f4" stroke-width="0.35" textLength="41.52" lengthAdjust="spacingAndGlyphs" xml:space="preserve">Table:</text><text x="167.00" y="501" font-size="20.78" fill="#f4f4f4" stroke="#f4f4f4" stroke-width="0.35" textLength="14.81" lengthAdjust="spacingAndGlyphs" xml:space="preserve">B1</text><text x="188.80" y="501" font-size="20.78" fill="#f4f4f4" stroke="#f4f4f4" stroke-width="0.35" textLength="30.99" lengthAdjust="spacingAndGlyphs" xml:space="preserve">(I2C:</text><text x="224.70" y="501" font-size="20.78" fill="#f4f4f4" stroke="#f4f4f4" stroke-width="0.35" textLength="36.17" lengthAdjust="spacingAndGlyphs" xml:space="preserve">Clock</text><text x="266.10" y="501" font-size="20.78" fill="#f4f4f4" stroke="#f4f4f4" stroke-width="0.35" textLength="24.00" lengthAdjust="spacingAndGlyphs" xml:space="preserve">SCL</text><text x="294.40" y="501" font-size="20.78" fill="#f4f4f4" stroke="#f4f4f4" stroke-width="0.35" textLength="7.79" lengthAdjust="spacingAndGlyphs" xml:space="preserve">=</text><text x="307.30" y="501" font-size="20.78" fill="#f4f4f4" stroke="#f4f4f4" stroke-width="0.35" textLength="22.42" lengthAdjust="spacingAndGlyphs" xml:space="preserve">C1,</text><text x="334.80" y="501" font-size="20.78" fill="#f4f4f4" stroke="#f4f4f4" stroke-width="0.35" textLength="31.80" lengthAdjust="spacingAndGlyphs" xml:space="preserve">Data</text><text x="373.50" y="501" font-size="20.78" fill="#f4f4f4" stroke="#f4f4f4" stroke-width="0.35" textLength="26.58" lengthAdjust="spacingAndGlyphs" xml:space="preserve">SDA</text><text x="405.30" y="501" font-size="20.78" fill="#f4f4f4" stroke="#f4f4f4" stroke-width="0.35" textLength="7.69" lengthAdjust="spacingAndGlyphs" xml:space="preserve">=</text><text x="419.00" y="501" font-size="20.78" fill="#f4f4f4" stroke="#f4f4f4" stroke-width="0.35" textLength="21.58" lengthAdjust="spacingAndGlyphs" xml:space="preserve">C2)</text></g></svg>
<svg class="ov" width="1280" height="720" viewBox="0 0 1280 720" font-family="Liberation Sans, sans-serif">
</svg>
<svg class="ov" width="1280" height="720" viewBox="0 0 1280 720" font-family="Liberation Sans, sans-serif"><text x="103.10 115.47 127.84 140.21 152.58" y="528.50" font-size="13.20" fill="#2a86dc" text-anchor="middle" font-weight="700">Frame</text><text x="189.69 202.06 214.43 226.80 239.17" y="528.50" font-size="13.20" fill="#2a86dc" text-anchor="middle" font-weight="700">Start</text><text x="263.91 276.28 288.65 301.02" y="528.50" font-size="13.20" fill="#2a86dc" text-anchor="middle" font-weight="700">Time</text><text x="325.76 338.13 350.50 362.87" y="528.50" font-size="13.20" fill="#2a86dc" text-anchor="middle" font-weight="700">Type</text><text x="461.83 474.20" y="528.50" font-size="13.20" fill="#2a86dc" text-anchor="middle" font-weight="700">ID</text><text x="498.94 511.31 523.68 536.05 548.42 560.79" y="528.50" font-size="13.20" fill="#2a86dc" text-anchor="middle" font-weight="700">Length</text><text x="585.53 597.90 610.27 622.64 635.01 647.38 659.75 672.12 684.49 696.86 709.23 721.60 733.97 746.34 758.71 771.08 783.45" y="528.50" font-size="13.20" fill="#2a86dc" text-anchor="middle" font-weight="700">Data(hexadecimal)</text><text x="993.74 1006.11 1018.48 1030.85 1043.22" y="528.50" font-size="13.20" fill="#2a86dc" text-anchor="middle" font-weight="700">State</text><text x="152.58" y="551.50" font-size="13.20" fill="#e6fbff" text-anchor="middle" font-weight="700">1</text><text x="189.69 202.06 214.43 226.80 239.17 251.54 263.91 276.28 288.65 301.02" y="551.50" font-size="13.20" fill="#e6fbff" text-anchor="middle" font-weight="700">−600.000ns</text><text x="325.76 338.13 350.50 362.87 375.24" y="551.50" font-size="13.20" fill="#e6fbff" text-anchor="middle" font-weight="700">Write</text><text x="461.83 474.20" y="551.50" font-size="13.20" fill="#e6fbff" text-anchor="middle" font-weight="700">1E</text><text x="560.79" y="551.50" font-size="13.20" fill="#e6fbff" text-anchor="middle" font-weight="700">2</text><text x="585.53 597.90 610.27 622.64" y="551.50" font-size="13.20" fill="#e6fbff" text-anchor="middle" font-weight="700">17FD</text><text x="993.74 1006.11" y="551.50" font-size="13.20" fill="#e6fbff" text-anchor="middle" font-weight="700">OK</text><g><text x="88.75" y="588" font-size="14.53" fill="#f4f4f4" stroke="#f4f4f4" stroke-width="0.2" textLength="49.26" lengthAdjust="spacingAndGlyphs" xml:space="preserve" font-weight="700">Frames:</text><text x="148.00" y="588" font-size="14.53" fill="#f4f4f4" stroke="#f4f4f4" stroke-width="0.2" textLength="21.98" lengthAdjust="spacingAndGlyphs" xml:space="preserve" font-weight="700">1−1</text><text x="175.40" y="588" font-size="14.53" fill="#f4f4f4" stroke="#f4f4f4" stroke-width="0.2" textLength="3.60" lengthAdjust="spacingAndGlyphs" xml:space="preserve" font-weight="700">/</text><text x="182.00" y="588" font-size="14.53" fill="#f4f4f4" stroke="#f4f4f4" stroke-width="0.2" textLength="8.99" lengthAdjust="spacingAndGlyphs" xml:space="preserve" font-weight="700">1;</text><text x="198.00" y="588" font-size="14.53" fill="#f4f4f4" stroke="#f4f4f4" stroke-width="0.2" textLength="34.01" lengthAdjust="spacingAndGlyphs" xml:space="preserve" font-weight="700">Data:</text><text x="237.00" y="588" font-size="14.53" fill="#f4f4f4" stroke="#f4f4f4" stroke-width="0.2" textLength="45.50" lengthAdjust="spacingAndGlyphs" xml:space="preserve" font-weight="700">0x17FD</text></g></svg>
</div>
<div id="history">
<div class="b" style="left:80px;top:601.3px;width:527.6px;height:73.7px;background:#000;"></div>
<div class="b" style="left:82px;top:629px;width:523.4px;height:44.6px;background:#171e22;"></div>
<div class="b" style="left:303.3px;top:629.2px;width:44.7px;height:45px;background:#fdfdfd;"></div>
<svg class="ov" width="1280" height="720" viewBox="0 0 1280 720" font-family="Liberation Sans, sans-serif"><text x="82.60" y="622" font-size="16.72" fill="#f4f4f4" stroke="#f4f4f4" stroke-width="0.45" textLength="36.69" lengthAdjust="spacingAndGlyphs" xml:space="preserve" font-weight="700">-34951</text><text x="305.00" y="622" font-size="16.72" fill="#f4f4f4" stroke="#f4f4f4" stroke-width="0.45" textLength="38.79" lengthAdjust="spacingAndGlyphs" xml:space="preserve" font-weight="700">-18699</text><text x="598.00" y="622" font-size="16.72" fill="#f4f4f4" stroke="#f4f4f4" stroke-width="0.45" textLength="7.42" lengthAdjust="spacingAndGlyphs" xml:space="preserve" font-weight="700">0</text></svg>
</div>
<div id="playback">
<div class="b pbtn" style="left:626px;top:609.2px;width:45.5px;height:45.8px;background:#2c3f4b;"></div>
<div class="b pbtn" style="left:675px;top:609.2px;width:45px;height:45.8px;background:#2c3f4b;"></div>
<div class="b pbtn" style="left:723.5px;top:609.2px;width:45px;height:45.8px;background:#2c3f4b;"></div>
<div class="b pbtn" style="left:772px;top:609.2px;width:45px;height:45.8px;background:#2c3f4b;"></div>
<div class="b pbtn" style="left:820.5px;top:609.2px;width:45px;height:45.8px;background:#2c3f4b;"></div>
<div class="b pbtn" style="left:869px;top:609.2px;width:45px;height:45.8px;background:#2c3f4b;"></div>
<div class="b pbtn" style="left:917.5px;top:609.2px;width:45px;height:45.8px;background:#2c3f4b;"></div>
<div class="b pbtn" style="left:966px;top:609.2px;width:45px;height:45.8px;background:#2c3f4b;"></div>
<div class="b pbtn" style="left:1014.5px;top:609.2px;width:45.5px;height:45.8px;background:#2c3f4b;"></div>
<div class="b pbtn" style="left:1063px;top:609.2px;width:45.5px;height:45.8px;background:#2c3f4b;"></div>
<svg class="ov" width="1280" height="720" viewBox="0 0 1280 720" font-family="Liberation Sans, sans-serif"><text x="639.75" y="670" font-size="14.53" fill="#f4f4f4" stroke="#f4f4f4" stroke-width="0.45" textLength="18.34" lengthAdjust="spacingAndGlyphs" xml:space="preserve" font-weight="700">Run</text><text x="684.75" y="670" font-size="14.53" fill="#f4f4f4" stroke="#f4f4f4" stroke-width="0.45" textLength="25.00" lengthAdjust="spacingAndGlyphs" xml:space="preserve" font-weight="700">Prev.</text><text x="733.50" y="670" font-size="14.53" fill="#f4f4f4" stroke="#f4f4f4" stroke-width="0.45" textLength="24.40" lengthAdjust="spacingAndGlyphs" xml:space="preserve" font-weight="700">Next</text><text x="776.60" y="670" font-size="14.53" fill="#f4f4f4" stroke="#f4f4f4" stroke-width="0.45" textLength="35.30" lengthAdjust="spacingAndGlyphs" xml:space="preserve" font-weight="700">Repeat</text><text x="827.90" y="670" font-size="14.53" fill="#f4f4f4" stroke="#f4f4f4" stroke-width="0.45" textLength="30.21" lengthAdjust="spacingAndGlyphs" xml:space="preserve" font-weight="700">Speed</text><text x="880.40" y="670" font-size="14.53" fill="#f4f4f4" stroke="#f4f4f4" stroke-width="0.45" textLength="22.50" lengthAdjust="spacingAndGlyphs" xml:space="preserve" font-weight="700">Save</text><text x="920.00" y="670" font-size="14.53" fill="#f4f4f4" stroke="#f4f4f4" stroke-width="0.45" textLength="39.76" lengthAdjust="spacingAndGlyphs" xml:space="preserve" font-weight="700">Number</text><text x="969.40" y="670" font-size="14.53" fill="#f4f4f4" stroke="#f4f4f4" stroke-width="0.45" textLength="38.35" lengthAdjust="spacingAndGlyphs" xml:space="preserve" font-weight="700">Overlay</text><text x="1017.25" y="670" font-size="14.53" fill="#f4f4f4" stroke="#f4f4f4" stroke-width="0.45" textLength="41.15" lengthAdjust="spacingAndGlyphs" xml:space="preserve" font-weight="700">Average</text><text x="1062.90" y="670" font-size="14.53" fill="#f4f4f4" stroke="#f4f4f4" stroke-width="0.45" textLength="45.61" lengthAdjust="spacingAndGlyphs" xml:space="preserve" font-weight="700">Envelope</text></svg>
</div>
<div id="channels">
<div class="b" style="left:75px;top:680.4px;width:1130px;height:38.6px;background:#0c1114;"></div>
<div class="b" style="left:75px;top:680.5px;width:175px;height:38.3px;background:#22303a;"></div>
<div class="b" style="left:75px;top:680.5px;width:175px;height:3px;background:#a08f1e;"></div>
<div class="b" style="left:75px;top:680.5px;width:37px;height:38.3px;background:#8c7c0a;"></div>
<div class="b" style="left:252px;top:680.5px;width:175.5px;height:38.3px;background:#22303a;"></div>
<div class="b" style="left:252px;top:680.5px;width:175.5px;height:3px;background:#138a13;"></div>
<div class="b" style="left:252px;top:680.5px;width:37.5px;height:38.3px;background:#078207;"></div>
<div class="b" style="left:429.5px;top:680.5px;width:175.5px;height:38.3px;background:#22303a;"></div>
<div class="b" style="left:429.5px;top:680.5px;width:175.5px;height:3px;background:#8a8a8a;"></div>
<div class="b" style="left:429.5px;top:680.5px;width:37.5px;height:38.3px;background:#8a8a8a;"></div>
<div class="b" style="left:606.5px;top:680.5px;width:176px;height:38.3px;background:#22303a;"></div>
<div class="b" style="left:606.5px;top:680.5px;width:176px;height:3px;background:#8a8a8a;"></div>
<div class="b" style="left:606.5px;top:680.5px;width:38px;height:38.3px;background:#8a8a8a;"></div>
<div class="b" style="left:784px;top:680.5px;width:176px;height:38.3px;background:#22303a;"></div>
<div class="b" style="left:784px;top:680.5px;width:176px;height:3px;background:#f4f4f4;"></div>
<div class="b" style="left:784px;top:680.5px;width:38px;height:38.3px;background:#fbfbfb;"></div>
<div class="b" style="left:961.8px;top:680.5px;width:174.4px;height:38.3px;background:#22303a;"></div>
<div class="b" style="left:1137.6px;top:680.5px;width:67.4px;height:38.3px;background:#22303a;"></div>
<svg class="ov" width="1280" height="720" viewBox="0 0 1280 720" font-family="Liberation Sans, sans-serif"><text x="84.20" y="706" font-size="19.62" fill="#0c0a00" stroke="#0c0a00" stroke-width="0.6" textLength="15.21" lengthAdjust="spacingAndGlyphs" xml:space="preserve">C1</text><text x="133.75" y="709" font-size="23.26" fill="#f4f4f4" stroke="#f4f4f4" stroke-width="0.35" textLength="24.35" lengthAdjust="spacingAndGlyphs" xml:space="preserve">1.5</text><text x="162.50" y="709" font-size="17.30" fill="#f4f4f4" stroke="#f4f4f4" stroke-width="0.35" textLength="8.74" lengthAdjust="spacingAndGlyphs" xml:space="preserve">V</text><text x="171.90" y="712" font-size="24.10" fill="#f4f4f4" stroke="#f4f4f4" stroke-width="0.35" textLength="6.80" lengthAdjust="spacingAndGlyphs" xml:space="preserve">/</text><text x="217.50" y="693" font-size="11.34" fill="#f4f4f4" stroke="#f4f4f4" stroke-width="0.35" textLength="4.90" lengthAdjust="spacingAndGlyphs" xml:space="preserve">B</text><text x="223.50" y="698" font-size="11.19" fill="#f4f4f4" stroke="#f4f4f4" stroke-width="0.35" textLength="7.09" lengthAdjust="spacingAndGlyphs" xml:space="preserve">W</text><text x="234.40" y="697" font-size="15.26" fill="#f4f4f4" stroke="#f4f4f4" stroke-width="0.35" textLength="13.09" lengthAdjust="spacingAndGlyphs" xml:space="preserve">DC</text><text x="230.60" y="716" font-size="11.92" fill="#cfcfcf" stroke="#cfcfcf" stroke-width="0.35" textLength="16.89" lengthAdjust="spacingAndGlyphs" xml:space="preserve">10:1</text><text x="262.25" y="706" font-size="19.62" fill="#011401" stroke="#011401" stroke-width="0.6" textLength="16.21" lengthAdjust="spacingAndGlyphs" xml:space="preserve">C2</text><text x="311.35" y="709" font-size="23.26" fill="#f4f4f4" stroke="#f4f4f4" stroke-width="0.35" textLength="24.35" lengthAdjust="spacingAndGlyphs" xml:space="preserve">1.5</text><text x="340.10" y="709" font-size="17.30" fill="#f4f4f4" stroke="#f4f4f4" stroke-width="0.35" textLength="8.74" lengthAdjust="spacingAndGlyphs" xml:space="preserve">V</text><text x="349.50" y="712" font-size="24.10" fill="#f4f4f4" stroke="#f4f4f4" stroke-width="0.35" textLength="6.80" lengthAdjust="spacingAndGlyphs" xml:space="preserve">/</text><text x="395.60" y="693" font-size="11.34" fill="#f4f4f4" stroke="#f4f4f4" stroke-width="0.35" textLength="4.90" lengthAdjust="spacingAndGlyphs" xml:space="preserve">B</text><text x="401.60" y="698" font-size="11.19" fill="#f4f4f4" stroke="#f4f4f4" stroke-width="0.35" textLength="7.09" lengthAdjust="spacingAndGlyphs" xml:space="preserve">W</text><text x="412.50" y="697" font-size="15.26" fill="#f4f4f4" stroke="#f4f4f4" stroke-width="0.35" textLength="13.09" lengthAdjust="spacingAndGlyphs" xml:space="preserve">DC</text><text x="408.70" y="716" font-size="11.92" fill="#cfcfcf" stroke="#cfcfcf" stroke-width="0.35" textLength="16.89" lengthAdjust="spacingAndGlyphs" xml:space="preserve">10:1</text><text x="439.70" y="706" font-size="19.62" fill="#101010" stroke="#101010" stroke-width="0.6" textLength="16.21" lengthAdjust="spacingAndGlyphs" xml:space="preserve">C3</text><text x="617.15" y="706" font-size="19.62" fill="#101010" stroke="#101010" stroke-width="0.6" textLength="16.21" lengthAdjust="spacingAndGlyphs" xml:space="preserve">C4</text><text x="792.70" y="706" font-size="17.73" fill="#101010" textLength="20.29" lengthAdjust="spacingAndGlyphs" xml:space="preserve" font-weight="700">Bus</text><text x="834.00" y="710" font-size="20.35" fill="#f4f4f4" stroke="#f4f4f4" stroke-width="0.35" textLength="21.22" lengthAdjust="spacingAndGlyphs" xml:space="preserve">I2C</text><text x="945.00" y="698" font-size="13.66" fill="#f4f4f4" stroke="#f4f4f4" stroke-width="0.1" textLength="11.31" lengthAdjust="spacingAndGlyphs" xml:space="preserve" font-weight="700">B1</text><text x="1153.80" y="717" font-size="15.41" fill="#f4f4f4" stroke="#f4f4f4" stroke-width="0.45" textLength="34.71" lengthAdjust="spacingAndGlyphs" xml:space="preserve" font-weight="700">Menu</text></svg>
</div>
<svg class="ov" width="1280" height="720" viewBox="0 0 1280 720">
<path d="M104.5,18.2 Q117.2,19.5 118.2,34.2" fill="none" stroke="#f2f2f2" stroke-width="3.6" stroke-linecap="round"/><path d="M96.8,18.1 L106.4,10.4 V25.2z" fill="#f2f2f2"/><rect x="166.3" y="9.8" width="22.4" height="2.3" fill="#f2f2f2"/><rect x="174.6" y="8.3" width="5.8" height="2" fill="#f2f2f2"/><rect x="168.8" y="13.8" width="18" height="22.6" fill="#f2f2f2"/><rect x="171.5" y="16.8" width="1.5" height="16.6" fill="#22303a"/><rect x="175.3" y="16.8" width="1.5" height="16.6" fill="#22303a"/><rect x="179.1" y="16.8" width="1.5" height="16.6" fill="#22303a"/><rect x="182.9" y="16.8" width="1.5" height="16.6" fill="#22303a"/><rect x="232.2" y="31" width="28.2" height="1.8" fill="#f2f2f2"/><rect x="232.8" y="12" width="2" height="19.5" fill="#f2f2f2"/><rect x="237.0" y="17.5" width="2" height="14.0" fill="#f2f2f2"/><rect x="241.0" y="20.8" width="2" height="10.7" fill="#f2f2f2"/><rect x="245.0" y="24.4" width="2" height="7.1" fill="#f2f2f2"/><rect x="249.0" y="25.6" width="2" height="5.9" fill="#f2f2f2"/><rect x="252.8" y="26.2" width="2" height="5.3" fill="#f2f2f2"/><rect x="256.8" y="26.2" width="2" height="5.3" fill="#f2f2f2"/><g transform="translate(301.2,37.2) rotate(-46)"><path d="M0,0 L8.5,-5.6 H36 V5.6 H8.5z" fill="#f2f2f2"/><path d="M3.2,0 L8.6,-3.4 V3.4z" fill="#22303a"/><rect x="12.5" y="-1" width="19.5" height="2" fill="#22303a"/></g><rect x="370.8" y="14.3" width="18.6" height="12.4" fill="none" stroke="#f2f2f2" stroke-width="1.9"/><path d="M373.5,20.5 q2.2,-4.2 4.4,0 t4.4,0" fill="none" stroke="#2391e6" stroke-width="1.4"/><path d="M380.4,27.5 V34.5 M377,36 l3.4,-2.6 l3.4,2.6" fill="none" stroke="#f2f2f2" stroke-width="1.6"/><circle cx="393.5" cy="17.8" r="2.3" fill="#2391e6"/><path d="M391.2,21.2 h4.6 l2.2,5.4 -1,0.6 -1.2,-2.6 V36.4 h-1.9 v-6.6 h-0.8 v6.6 h-1.9 V23.6 l-3.4,-1.6 0.5,-1.2z" fill="#2391e6"/><circle cx="638.8" cy="34.5" r="4.5" fill="none" stroke="#f2f2f2" stroke-width="3.2"/><circle cx="638.8" cy="34.5" r="6.6" fill="none" stroke="#f2f2f2" stroke-width="2.2" stroke-dasharray="1.9 1.556" transform="rotate(-12 638.8 34.5)"/><path d="M635.6,61.2h6.4l-3.2,3.6z" fill="#f2f2f2"/><rect x="1180.6" y="41.8" width="7.5" height="5.2" fill="#1fe81f"/><rect x="1170" y="49.8" width="28.8" height="1.8" fill="#1fe81f"/><rect x="1183.6" y="46.5" width="1.6" height="4" fill="#1fe81f"/><rect x="1176.4" y="51" width="1.6" height="4" fill="#1fe81f"/><rect x="1190.4" y="51" width="1.6" height="4" fill="#1fe81f"/><rect x="1173.4" y="54.4" width="7.6" height="5.4" fill="#1fe81f"/><rect x="1187.4" y="54.4" width="7.6" height="5.4" fill="#1fe81f"/>
<path d="M89.7,457.2 h14 l-7,-7.8z" fill="#f2f2f2"/><path d="M89.7,461.8 h14 l-7,7.8z" fill="#f2f2f2"/><path d="M1176,457.2 h14 l-7,-7.8z" fill="#f2f2f2"/><path d="M1176,461.8 h14 l-7,7.8z" fill="#f2f2f2"/>
<path d="M220.6,454.4 L230.6,465 M230.6,454.4 L220.6,465" stroke="#0a1a4a" stroke-width="2.3" fill="none"/>
<path d="M1169.2,482.8 H1190.10 L1196.0,488.70 V510.0 H1169.2z" fill="none" stroke="#f4f4f4" stroke-width="1.9" stroke-linejoin="miter"/><path d="M1176.44,482.8 V492.32 H1188.76 V482.8" fill="none" stroke="#f4f4f4" stroke-width="1.9"/><rect x="1175.36" y="497.76" width="14.47" height="12.24" fill="#f4f4f4"/>
<path d="M638.8,620.6 V644 L658.2,632.3z" fill="#f4f4f4"/><path d="M683.1,632.4 L696,622.9 V641.9z M698.5,632.4 L711.3,622.9 V641.9z" fill="#f4f4f4"/><path d="M744.4,632.4 L731.6,622.9 V641.9z M759.8,632.4 L746.9,622.9 V641.9z" fill="#f4f4f4"/><path d="M782.8,640.6 C775.5,637.5 775.3,626 785.5,622.4 H797" fill="none" stroke="#f4f4f4" stroke-width="2.8" stroke-linecap="round"/><path d="M795.2,616.6 L803.6,622.3 L795.2,628z" fill="#f4f4f4"/><path d="M806.4,624 C813.5,627.5 813.3,639 803.5,642.4 H792" fill="none" stroke="#f4f4f4" stroke-width="2.8" stroke-linecap="round"/><path d="M794,636.4 L785.4,642.4 L794,648.2z" fill="#f4f4f4"/><path d="M828.2,640.5 A15.2,15.2 0 0 1 858.6,640.5" fill="none" stroke="#f4f4f4" stroke-width="4.6"/><path d="M833.2,628.2 l2.6,3.4 M853.2,627.8 l-2.6,3.6" stroke="#2c3f4b" stroke-width="1.3"/><path d="M832.6,629.6 L843.6,641.2" stroke="#1e8fe8" stroke-width="3.4" stroke-linecap="round"/><text x="847.2" y="648.8" font-size="18.5" font-weight="700" fill="#1e8fe8" font-family="Liberation Sans, sans-serif">A</text><path d="M875.4,615.7 H900.67 L907.8,622.83 V648.9000000000001 H875.4z" fill="none" stroke="#f4f4f4" stroke-width="2.0" stroke-linejoin="miter"/><path d="M884.15,615.7 V627.32 H899.05 V615.7" fill="none" stroke="#f4f4f4" stroke-width="2.0"/><rect x="882.85" y="633.96" width="17.50" height="14.94" fill="#f4f4f4"/><rect x="927.90" y="620.00" width="6.6" height="6.7" fill="#f4f4f4"/><rect x="927.90" y="628.95" width="6.6" height="6.7" fill="#f4f4f4"/><rect x="927.90" y="637.90" width="6.6" height="6.7" fill="#f4f4f4"/><rect x="936.75" y="620.00" width="6.6" height="6.7" fill="#f4f4f4"/><rect x="936.75" y="628.95" width="6.6" height="6.7" fill="#f4f4f4"/><rect x="936.75" y="637.90" width="6.6" height="6.7" fill="#f4f4f4"/><rect x="945.60" y="620.00" width="6.6" height="6.7" fill="#f4f4f4"/><rect x="945.60" y="628.95" width="6.6" height="6.7" fill="#f4f4f4"/><rect x="945.60" y="637.90" width="6.6" height="6.7" fill="#f4f4f4"/><path d="M978,628.5 C983,612 990,618 994,630 S1001,646 1007,631" fill="none" stroke="#a9b0b4" stroke-width="1.8"/><path d="M975,633 C979,618 985,618 988,630 S996,647 1002,634 l2.5,3" fill="none" stroke="#c9ced0" stroke-width="1.8"/><path d="M970.5,636 C974,621 980.5,619 984.5,631 S992,650 997.5,638" fill="none" stroke="#f4f4f4" stroke-width="2.4" stroke-linecap="round"/><path d="M1019,636.2 C1021.5,641 1025,639 1027,632 C1029.5,622.5 1032.5,619.5 1036,628 C1039,636 1041.5,641 1045,634 C1048,625 1049.5,619.5 1052.5,626 C1054,629.5 1055,633 1056.3,636.8" fill="none" stroke="#f4f4f4" stroke-width="2.5" stroke-linecap="round" stroke-linejoin="round"/><path d="M1067,634.5 H1071 C1074,634 1075,625 1078.5,623.6 C1082,622.6 1083,624.4 1086,623.6 C1089,622.6 1092,622.4 1093.5,626 C1095.5,631 1096.5,634.5 1099,632.5 L1101,630.4 L1103.6,634.6 H1105.6 V640.6 H1097.5 C1094,639 1093,631.6 1090.5,630 C1088,629.6 1087,633.8 1085,633.8 C1083.5,633.8 1082.5,629.4 1080,630 C1076.5,632 1075.5,640.6 1071.5,641 H1067z" fill="#a4a8ab"/><path d="M1067,634.5 H1071 C1074,634 1075,625 1078.5,623.6 C1082,622.6 1083,624.4 1086,623.6 C1089,622.6 1092,622.4 1093.5,626 C1095.5,631 1096.5,634.5 1099,632.5 L1101,630.4 L1103.6,634.6 H1105.6" fill="none" stroke="#f4f4f4" stroke-width="2" stroke-linejoin="round"/><path d="M1067,641 H1071.5 C1075.5,640.6 1076.5,632 1080,630 C1082.5,629.4 1083.5,633.8 1085,633.8 C1087,633.8 1088,629.6 1090.5,630 C1093,631.6 1094,639 1097.5,640.6 H1105.6" fill="none" stroke="#f4f4f4" stroke-width="2" stroke-linejoin="round"/>
<path d="M1171.3,652.9000000000001 L1199.6,681.2 L1171.3,709.5 L1143.0,681.2z" fill="#1b252b" stroke="#f0872a" stroke-width="1.7"/><path d="M1171.3,658.8000000000001 L1193.7,681.2 L1171.3,703.6 L1148.8999999999999,681.2z" fill="#1d2a31" stroke="#1c9bf2" stroke-width="3.3"/><path d="M1160.0,669.9000000000001 L1182.6,692.5" fill="none" stroke="#1c9bf2" stroke-width="2.2"/><text x="1161.7" y="682.3" font-size="13.8" font-weight="700" fill="#1c9bf2" stroke="#1d2a31" stroke-width="1.2" paint-order="stroke" font-family="Liberation Sans, sans-serif">R</text><text x="1172.2" y="692.2" font-size="13.8" font-weight="700" fill="#1c9bf2" stroke="#1d2a31" stroke-width="1.2" paint-order="stroke" font-family="Liberation Sans, sans-serif">S</text><path d="M1160.0,692.5 C1167.3,686.2 1173.3,678.2 1182.6,669.9000000000001" fill="none" stroke="#1c9bf2" stroke-width="2.4"/>
</svg>
<div class="b" style="left:73.6px;top:0px;width:1.4px;height:720px;background:#b8bcbc;"></div>
<div class="b" style="left:74px;top:718.8px;width:1131.4px;height:1.2px;background:#fafafa;"></div>
<div class="b" style="left:0px;top:0px;width:73.6px;height:720px;background:#000;"></div>
<div class="b" style="left:1205.3px;top:0px;width:74.7px;height:720px;background:#000;"></div>
</div>
</body></html>
